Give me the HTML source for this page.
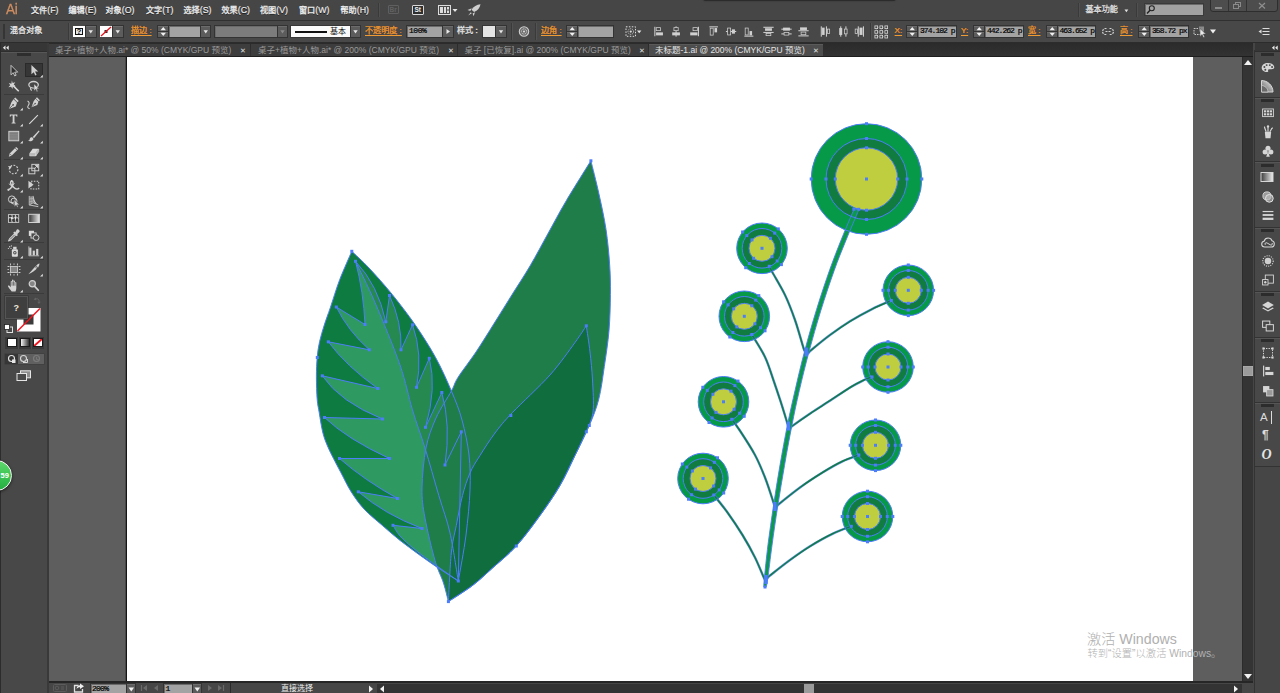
<!DOCTYPE html>
<html lang="zh-CN">
<head>
<meta charset="utf-8">
<title>Adobe Illustrator</title>
<style>
html,body{margin:0;padding:0;}
body{width:1280px;height:693px;position:relative;overflow:hidden;background:#5e5e5e;
 font-family:"Liberation Sans","Noto Sans CJK SC",sans-serif;font-size:8.1px;color:#e6e6e6;}
.a{position:absolute;}
.t{position:absolute;white-space:nowrap;line-height:12px;height:12px;}
#menubar{left:0;top:0;width:1280px;height:20px;background:#464646;}
#ctrlbar{left:0;top:21px;width:1280px;height:21px;background:#484848;}
#l1{left:0;top:20px;width:1280px;height:1px;background:#303030;}
#l2{left:0;top:42px;width:1280px;height:1px;background:#2c2c2c;}
#tabbar{left:48px;top:43px;width:1206px;height:13px;background:linear-gradient(180deg,#2b2b2b,#323232);}
#tabline{left:48px;top:56px;width:1206px;height:1.2px;background:#1e1e1e;}
.tab{position:absolute;top:0;height:13px;background:#3d3d3d;color:#9a9a9a;font-size:8.5px;line-height:13px;white-space:nowrap;}
.tab.on{background:#4d4d4d;color:#e4e4e4;box-shadow:inset 0 1px 0 #5a5a5a;}
.tab span{position:absolute;top:0;}
.mi{top:4px;color:#f0f0f0;font-size:8.1px;-webkit-text-stroke:0.3px;text-shadow:0 0.5px 0.5px rgba(0,0,0,.6);}
.or{color:#f09a34;-webkit-text-stroke:0.2px;text-decoration:underline;text-underline-offset:1.8px;text-decoration-thickness:0.8px;text-shadow:0 0 1px rgba(0,0,0,.55);}
.fld{position:absolute;background:#a3a3a3;color:#000;-webkit-text-stroke:0.2px;font-family:'Liberation Mono',monospace;font-size:8px;letter-spacing:-0.95px;line-height:10px;height:11px;top:26px;box-shadow:inset 1px 1px 0 #6a6a6a,0 0 0 1px #333;white-space:nowrap;overflow:hidden;}
.btn{position:absolute;background:#5c5c5c;top:26px;height:11px;box-shadow:0 0 0 1px #333,inset 0 1px 0 #6c6c6c;}
.sep{position:absolute;top:23px;width:1px;height:17px;background:#3a3a3a;box-shadow:1px 0 0 #525252;}
#tools{left:0;top:43px;width:48px;height:650px;background:#484848;}
#rpanel{left:1254px;top:43px;width:26px;height:650px;background:#484848;}
#artboard{left:127.3px;top:57.2px;width:1066px;height:624.1px;background:#fff;box-shadow:-1.3px 0 0 #161616;}
#vscroll{left:1242.3px;top:57px;width:10.5px;height:626px;background:#343434;box-shadow:inset 1px 0 0 #2b2b2b;}
#status{left:49px;top:682px;width:1204px;height:11px;background:#464646;}
</style>
</head>
<body>
<!-- ====== canvas ====== -->
<div class="a" id="artboard"></div>
<svg class="a" style="left:0;top:0" width="1280" height="693" viewBox="0 0 1280 693">
<path d="M351.8 251.3C354.7 254.1 362.3 260.9 369 268C375.7 275.1 384.4 284.8 392 294.2C399.6 303.6 407.5 313.8 414.8 324.3C422.1 334.9 429.5 346.4 435.6 357.5C441.7 368.6 447 380.6 451.4 391C455.8 401.4 459.1 409.3 462 420C464.9 430.7 467.7 443.3 469 455C470.3 466.7 470.5 476.7 470 490C469.5 503.3 467.9 519.8 466 535C464.1 550.2 459.6 573.3 458.3 581C454.8 578.8 444.1 571.9 437.5 567.5C430.9 563.1 425.1 558.9 418.8 554.4C412.6 549.9 406.1 545.2 400 540.4C393.9 535.5 388.1 530.5 382.2 525.3C376.3 520.1 369.5 514.9 364.4 509.4C359.2 503.8 355.2 498.1 351.3 492C347.4 485.9 344 478.4 341 472.8C338 467.2 335.8 463 333.5 458.5C331.2 454 329.3 450.3 327.5 446C325.7 441.7 324.3 438.4 322.9 432.9C321.5 427.4 320.2 418.6 319.3 413C318.4 407.4 317.7 405.6 317.2 399.5C316.7 393.4 316.4 383.5 316.4 376.5C316.4 369.5 316.7 363.3 317.2 357.5C317.7 351.7 318.4 347 319.6 341.6C320.8 336.2 322.5 330.7 324.3 325C326.1 319.3 327.8 315.1 330.4 307.5C333 299.9 336.1 289.1 339.7 279.7C343.3 270.3 349.8 256 351.8 251.3Z" fill="#0e7b41"/>
<path d="M355.5 261.3Q363.5 292 365 324.5L336.3 307Q348 331 369.3 349.8L328.3 341.8Q346 366 377.8 388.5L322.3 375.8Q340 402 382.5 419L324.5 417.5Q347 439 389.5 458.5L339.5 458.5Q364 480 397.5 498.5L358.3 491.8Q384 514 422 528.5L393 525.3C394.2 527.1 396.3 531.9 400 536C403.7 540.1 409.4 545.1 415 549.7C420.6 554.3 426.6 558.6 433.8 563.8C441 569 454.2 578.1 458.3 581C456.9 573 453.2 547.2 450 533C446.8 518.8 443 509.7 438.8 495.5C434.6 481.3 429.4 462.2 425 448C420.6 433.8 416.7 423.8 412.5 410C408.3 396.2 406.2 382.9 400 365C393.8 347.1 382.4 319.8 375 302.5C367.6 285.2 358.8 268.2 355.5 261.3Z" fill="#2f9962"/>
<path d="M355.5 261.3Q378 285 385.8 321.8L389.5 295.5Q402 322 401 349.8L412.5 324.8Q423 354 416.5 387.3L429.3 358.3Q437 388 425.5 427.3L441.8 392.5Q451 425 445 465L461.3 431.8L458.3 581C456.9 573 453.2 547.2 450 533C446.8 518.8 443 509.7 438.8 495.5C434.6 481.3 429.4 462.2 425 448C420.6 433.8 416.7 423.8 412.5 410C408.3 396.2 406.2 382.9 400 365C393.8 347.1 382.4 319.8 375 302.5C367.6 285.2 358.8 268.2 355.5 261.3Z" fill="#26894f"/>
<path d="M590.9 160.8C592.2 166.2 596.3 181.9 598.8 193.3C601.3 204.7 604.2 217.4 606 229.4C607.8 241.4 609 254.7 609.7 265.5C610.4 276.3 610.5 283.6 610.4 294.4C610.3 305.2 610 318.5 609 330.5C608 342.5 606 355.2 604.3 366.6C602.6 378 601.3 389.2 598.8 399C596.3 408.8 593.3 416.1 589.3 425.5C585.3 434.9 579.9 445.5 575 455.5C570.1 465.5 565.8 475.5 560 485.5C554.2 495.5 547.3 505.4 540 515.5C532.7 525.6 524.2 537.2 516.3 546C508.4 554.8 499.8 561.4 492.5 568C485.2 574.6 479.9 579.9 472.5 585.5C465.1 591.1 452.4 598.9 448.4 601.6C447.6 598.5 445.7 589.9 443.5 583C441.3 576.1 438.1 571.3 435 560.5C431.9 549.7 427.2 530.1 425 518C422.8 505.9 421.8 499.7 422 488C422.2 476.3 423.7 459.7 426 448C428.3 436.3 431.8 427.5 436 418C440.2 408.5 447.7 397.8 451.4 391C455.1 384.2 453.9 383.9 458 377.4C462.1 370.9 470 361 476 352C482 343 488.2 332.9 494.2 323.3C500.2 313.7 506.2 304 512.2 294.4C518.2 284.8 524.3 275.7 530.3 265.5C536.3 255.3 542.3 243.8 548.3 233C554.3 222.2 559.3 212.5 566.4 200.5C573.5 188.5 586.8 167.4 590.9 160.8Z" fill="#1f7d49"/>
<path d="M586.3 325.8C586.9 330.2 589 343 590 352C591 361 592 370 592.5 380C593 390 594 403.4 593 412C592 420.6 587.4 428.5 586.3 431.8C584.4 435.8 579.4 446.6 575 455.5C570.6 464.4 565.8 475.5 560 485.5C554.2 495.5 547.3 505.4 540 515.5C532.7 525.6 524.2 537.2 516.3 546C508.4 554.8 499.8 561.4 492.5 568C485.2 574.6 479.9 579.9 472.5 585.5C465.1 591.1 452.4 598.9 448.4 601.6C448.9 593.5 450 565.7 451.3 553C452.6 540.3 454.4 535.1 456.3 525.5C458.2 515.9 460.2 504.2 462.5 495.5C464.8 486.8 467.1 479.7 470 473C472.9 466.3 475.8 462.2 480 455.5C484.2 448.8 489.6 440.2 495 433C500.4 425.8 503.3 422.2 512.5 412.5C521.7 402.8 539.6 386.7 550 375C560.4 363.3 569 350.7 575 342.5C581 334.3 584.4 328.6 586.3 325.8Z" fill="#106d3e"/>
<circle cx="866.5" cy="179" r="55.3" fill="#069a48"/>
<circle cx="866.5" cy="179" r="40.5" fill="#117c40"/>
<circle cx="866.5" cy="179" r="31.2" fill="#bfce3f"/>
<circle cx="762" cy="248.3" r="25.3" fill="#069a48"/>
<circle cx="762" cy="248.3" r="19.8" fill="#117c40"/>
<circle cx="762" cy="248.3" r="13" fill="#bfce3f"/>
<circle cx="908.3" cy="290.3" r="25.3" fill="#069a48"/>
<circle cx="908.3" cy="290.3" r="19.8" fill="#117c40"/>
<circle cx="908.3" cy="290.3" r="13" fill="#bfce3f"/>
<circle cx="744.3" cy="316.3" r="25.3" fill="#069a48"/>
<circle cx="744.3" cy="316.3" r="19.8" fill="#117c40"/>
<circle cx="744.3" cy="316.3" r="13" fill="#bfce3f"/>
<circle cx="888" cy="367" r="25.3" fill="#069a48"/>
<circle cx="888" cy="367" r="19.8" fill="#117c40"/>
<circle cx="888" cy="367" r="13" fill="#bfce3f"/>
<circle cx="723.5" cy="401.8" r="25.3" fill="#069a48"/>
<circle cx="723.5" cy="401.8" r="19.8" fill="#117c40"/>
<circle cx="723.5" cy="401.8" r="13" fill="#bfce3f"/>
<circle cx="875.5" cy="445.3" r="25.3" fill="#069a48"/>
<circle cx="875.5" cy="445.3" r="19.8" fill="#117c40"/>
<circle cx="875.5" cy="445.3" r="13" fill="#bfce3f"/>
<circle cx="703" cy="478.5" r="25.3" fill="#069a48"/>
<circle cx="703" cy="478.5" r="19.8" fill="#117c40"/>
<circle cx="703" cy="478.5" r="13" fill="#bfce3f"/>
<circle cx="867.5" cy="516.5" r="25.3" fill="#069a48"/>
<circle cx="867.5" cy="516.5" r="19.8" fill="#117c40"/>
<circle cx="867.5" cy="516.5" r="13" fill="#bfce3f"/>
<g fill="none" stroke="#4c7dfa" stroke-width="2.500" stroke-linecap="round" opacity="0.800">
<path d="M769.3 266.3C769.8 267.3 769.9 267.7 772.5 272.5C775.1 277.3 781.2 287.1 785 295C788.8 302.9 791.9 311.2 795 320C798.1 328.8 801.8 342.7 803.5 348C805.2 353.3 805.2 351.3 805.5 352"/>
<path d="M891.3 300.5C888.2 301.9 879.4 305.3 872.5 308.8C865.6 312.3 857.1 316.9 850 321.3C842.9 325.7 836.5 330.2 830 335C823.5 339.8 814.9 347 811.3 350C807.7 353 809 352.5 808.5 353"/>
<path d="M751.8 334.5C754 338.2 761.4 349.4 765 357C768.6 364.6 770.9 372.8 773.4 380C775.9 387.2 778 393.5 780.2 400.2C782.4 406.9 785.2 416.1 786.5 420.4C787.8 424.7 787.8 425.1 788 426"/>
<path d="M872 377C870.7 377.5 867.5 378.3 864 380C860.5 381.7 856.4 383.6 850.9 387C845.4 390.4 837.4 395.8 830.7 400.2C824 404.6 816.9 409 810.5 413.3C804.1 417.6 795.6 423.6 792.3 426C789 428.4 790.8 427.2 790.5 427.5"/>
<path d="M731.8 419.3C733.1 421.1 735.6 424.1 739.5 430C743.4 435.9 750.8 447.1 755 455C759.2 462.9 761.9 469.6 765 477.5C768.1 485.4 771.9 497.6 773.5 502.5C775.1 507.4 774.3 506.2 774.5 507"/>
<path d="M858.8 455C856.1 456.1 848.5 458.4 842.5 461.3C836.5 464.2 829.6 468.1 822.5 472.5C815.4 476.9 807.2 482.2 800 487.5C792.8 492.8 782.8 500.9 779 504C775.2 507.1 777.3 505.7 777 506"/>
<path d="M713.8 495C716.1 497.9 722.7 505.8 727.5 512.5C732.3 519.2 737.9 527.5 742.5 535C747.1 542.5 751.5 550.4 755 557.5C758.5 564.6 762.1 573.8 763.8 577.5C765.5 581.2 764.8 579.6 765 580"/>
<path d="M851.3 526.3C848.2 527.5 839.4 530.5 832.5 533.8C825.6 537.1 817.1 541.9 810 546.3C802.9 550.7 796.7 555.1 790 560C783.3 564.9 773.8 572.5 770 575.5C766.2 578.5 767.9 577.6 767.5 578"/>
</g>
<g fill="none" stroke="#127c40" stroke-width="1.500" stroke-linecap="round">
<path d="M769.3 266.3C769.8 267.3 769.9 267.7 772.5 272.5C775.1 277.3 781.2 287.1 785 295C788.8 302.9 791.9 311.2 795 320C798.1 328.8 801.8 342.7 803.5 348C805.2 353.3 805.2 351.3 805.5 352"/>
<path d="M891.3 300.5C888.2 301.9 879.4 305.3 872.5 308.8C865.6 312.3 857.1 316.9 850 321.3C842.9 325.7 836.5 330.2 830 335C823.5 339.8 814.9 347 811.3 350C807.7 353 809 352.5 808.5 353"/>
<path d="M751.8 334.5C754 338.2 761.4 349.4 765 357C768.6 364.6 770.9 372.8 773.4 380C775.9 387.2 778 393.5 780.2 400.2C782.4 406.9 785.2 416.1 786.5 420.4C787.8 424.7 787.8 425.1 788 426"/>
<path d="M872 377C870.7 377.5 867.5 378.3 864 380C860.5 381.7 856.4 383.6 850.9 387C845.4 390.4 837.4 395.8 830.7 400.2C824 404.6 816.9 409 810.5 413.3C804.1 417.6 795.6 423.6 792.3 426C789 428.4 790.8 427.2 790.5 427.5"/>
<path d="M731.8 419.3C733.1 421.1 735.6 424.1 739.5 430C743.4 435.9 750.8 447.1 755 455C759.2 462.9 761.9 469.6 765 477.5C768.1 485.4 771.9 497.6 773.5 502.5C775.1 507.4 774.3 506.2 774.5 507"/>
<path d="M858.8 455C856.1 456.1 848.5 458.4 842.5 461.3C836.5 464.2 829.6 468.1 822.5 472.5C815.4 476.9 807.2 482.2 800 487.5C792.8 492.8 782.8 500.9 779 504C775.2 507.1 777.3 505.7 777 506"/>
<path d="M713.8 495C716.1 497.9 722.7 505.8 727.5 512.5C732.3 519.2 737.9 527.5 742.5 535C747.1 542.5 751.5 550.4 755 557.5C758.5 564.6 762.1 573.8 763.8 577.5C765.5 581.2 764.8 579.6 765 580"/>
<path d="M851.3 526.3C848.2 527.5 839.4 530.5 832.5 533.8C825.6 537.1 817.1 541.9 810 546.3C802.9 550.7 796.7 555.1 790 560C783.3 564.9 773.8 572.5 770 575.5C766.2 578.5 767.9 577.6 767.5 578"/>
</g>
<path d="M854.4 208.4C852.2 213.5 845.5 229 841.5 239.1C837.4 249.3 834.1 257.6 829.9 269.3C825.8 281 820.8 295.7 816.6 309.4C812.4 323 808.2 337.6 804.7 350.9C801.1 364.3 798.1 377.3 795.3 389.5C792.4 401.8 790.1 412.1 787.5 424.6C785 437.1 782.5 451.1 780.1 464.6C777.8 478.1 775.5 492.3 773.5 505.7C771.5 519 769.6 532.6 768 544.7C766.5 556.9 765 571.8 764.3 578.8C763.6 585.8 763.9 585.5 763.8 586.9L766.2 587.1C766.4 585.8 766.7 586.2 767.7 579.2C768.7 572.2 770.3 557.4 772 545.3C773.6 533.1 775.6 519.6 777.7 506.3C779.8 493 782.1 478.9 784.5 465.4C786.8 451.9 789.4 437.9 791.9 425.4C794.3 412.9 796.5 402.7 799.3 390.5C802.2 378.2 805.3 365.4 808.9 352.1C812.5 338.8 816.6 324.2 820.8 310.6C825 297.1 829.9 282.4 834.1 270.7C838.2 259.1 841.6 251 845.7 240.9C849.8 230.8 856.5 215.3 858.6 210.2Z" fill="#0a9a48" stroke="#4c7dfa" stroke-width="0.900"/>
<g fill="none" stroke="#4c7dfa" stroke-width="1">
<path d="M351.8 251.3C354.7 254.1 362.3 260.9 369 268C375.7 275.1 384.4 284.8 392 294.2C399.6 303.6 407.5 313.8 414.8 324.3C422.1 334.9 429.5 346.4 435.6 357.5C441.7 368.6 447 380.6 451.4 391C455.8 401.4 459.1 409.3 462 420C464.9 430.7 467.7 443.3 469 455C470.3 466.7 470.5 476.7 470 490C469.5 503.3 467.9 519.8 466 535C464.1 550.2 459.6 573.3 458.3 581C454.8 578.8 444.1 571.9 437.5 567.5C430.9 563.1 425.1 558.9 418.8 554.4C412.6 549.9 406.1 545.2 400 540.4C393.9 535.5 388.1 530.5 382.2 525.3C376.3 520.1 369.5 514.9 364.4 509.4C359.2 503.8 355.2 498.1 351.3 492C347.4 485.9 344 478.4 341 472.8C338 467.2 335.8 463 333.5 458.5C331.2 454 329.3 450.3 327.5 446C325.7 441.7 324.3 438.4 322.9 432.9C321.5 427.4 320.2 418.6 319.3 413C318.4 407.4 317.7 405.6 317.2 399.5C316.7 393.4 316.4 383.5 316.4 376.5C316.4 369.5 316.7 363.3 317.2 357.5C317.7 351.7 318.4 347 319.6 341.6C320.8 336.2 322.5 330.7 324.3 325C326.1 319.3 327.8 315.1 330.4 307.5C333 299.9 336.1 289.1 339.7 279.7C343.3 270.3 349.8 256 351.8 251.3Z"/>
<path d="M355.5 261.3Q363.5 292 365 324.5L336.3 307Q348 331 369.3 349.8L328.3 341.8Q346 366 377.8 388.5L322.3 375.8Q340 402 382.5 419L324.5 417.5Q347 439 389.5 458.5L339.5 458.5Q364 480 397.5 498.5L358.3 491.8Q384 514 422 528.5L393 525.3C394.2 527.1 396.3 531.9 400 536C403.7 540.1 409.4 545.1 415 549.7C420.6 554.3 426.6 558.6 433.8 563.8C441 569 454.2 578.1 458.3 581"/>
<path d="M355.5 261.3Q378 285 385.8 321.8L389.5 295.5Q402 322 401 349.8L412.5 324.8Q423 354 416.5 387.3L429.3 358.3Q437 388 425.5 427.3L441.8 392.5Q451 425 445 465L461.3 431.8L458.3 581"/>
<path d="M355.5 261.3C358.8 268.2 367.6 285.2 375 302.5C382.4 319.8 393.8 347.1 400 365C406.2 382.9 408.3 396.2 412.5 410C416.7 423.8 420.6 433.8 425 448C429.4 462.2 434.6 481.3 438.8 495.5C443 509.7 446.8 518.8 450 533C453.2 547.2 456.9 573 458.3 581"/>
<path d="M590.9 160.8C592.2 166.2 596.3 181.9 598.8 193.3C601.3 204.7 604.2 217.4 606 229.4C607.8 241.4 609 254.7 609.7 265.5C610.4 276.3 610.5 283.6 610.4 294.4C610.3 305.2 610 318.5 609 330.5C608 342.5 606 355.2 604.3 366.6C602.6 378 601.3 389.2 598.8 399C596.3 408.8 593.3 416.1 589.3 425.5C585.3 434.9 579.9 445.5 575 455.5C570.1 465.5 565.8 475.5 560 485.5C554.2 495.5 547.3 505.4 540 515.5C532.7 525.6 524.2 537.2 516.3 546C508.4 554.8 499.8 561.4 492.5 568C485.2 574.6 479.9 579.9 472.5 585.5C465.1 591.1 452.4 598.9 448.4 601.6C447.6 598.5 445.7 589.9 443.5 583C441.3 576.1 438.1 571.3 435 560.5C431.9 549.7 427.2 530.1 425 518C422.8 505.9 421.8 499.7 422 488C422.2 476.3 423.7 459.7 426 448C428.3 436.3 431.8 427.5 436 418C440.2 408.5 447.7 397.8 451.4 391C455.1 384.2 453.9 383.9 458 377.4C462.1 370.9 470 361 476 352C482 343 488.2 332.9 494.2 323.3C500.2 313.7 506.2 304 512.2 294.4C518.2 284.8 524.3 275.7 530.3 265.5C536.3 255.3 542.3 243.8 548.3 233C554.3 222.2 559.3 212.5 566.4 200.5C573.5 188.5 586.8 167.4 590.9 160.8Z"/>
<path d="M586.3 325.8C586.9 330.2 589 343 590 352C591 361 592 370 592.5 380C593 390 594 403.4 593 412C592 420.6 587.4 428.5 586.3 431.8C584.4 435.8 579.4 446.6 575 455.5C570.6 464.4 565.8 475.5 560 485.5C554.2 495.5 547.3 505.4 540 515.5C532.7 525.6 524.2 537.2 516.3 546C508.4 554.8 499.8 561.4 492.5 568C485.2 574.6 479.9 579.9 472.5 585.5C465.1 591.1 452.4 598.9 448.4 601.6C448.9 593.5 450 565.7 451.3 553C452.6 540.3 454.4 535.1 456.3 525.5C458.2 515.9 460.2 504.2 462.5 495.5C464.8 486.8 467.1 479.7 470 473C472.9 466.3 475.8 462.2 480 455.5C484.2 448.8 489.6 440.2 495 433C500.4 425.8 503.3 422.2 512.5 412.5C521.7 402.8 539.6 386.7 550 375C560.4 363.3 569 350.7 575 342.5C581 334.3 584.4 328.6 586.3 325.8Z"/>
<circle cx="866.5" cy="179" r="55.3"/>
<circle cx="866.5" cy="179" r="40.5"/>
<circle cx="866.5" cy="179" r="31.2"/>
<circle cx="762" cy="248.3" r="25.3"/>
<circle cx="762" cy="248.3" r="19.8"/>
<circle cx="762" cy="248.3" r="13"/>
<circle cx="908.3" cy="290.3" r="25.3"/>
<circle cx="908.3" cy="290.3" r="19.8"/>
<circle cx="908.3" cy="290.3" r="13"/>
<circle cx="744.3" cy="316.3" r="25.3"/>
<circle cx="744.3" cy="316.3" r="19.8"/>
<circle cx="744.3" cy="316.3" r="13"/>
<circle cx="888" cy="367" r="25.3"/>
<circle cx="888" cy="367" r="19.8"/>
<circle cx="888" cy="367" r="13"/>
<circle cx="723.5" cy="401.8" r="25.3"/>
<circle cx="723.5" cy="401.8" r="19.8"/>
<circle cx="723.5" cy="401.8" r="13"/>
<circle cx="875.5" cy="445.3" r="25.3"/>
<circle cx="875.5" cy="445.3" r="19.8"/>
<circle cx="875.5" cy="445.3" r="13"/>
<circle cx="703" cy="478.5" r="25.3"/>
<circle cx="703" cy="478.5" r="19.8"/>
<circle cx="703" cy="478.5" r="13"/>
<circle cx="867.5" cy="516.5" r="25.3"/>
<circle cx="867.5" cy="516.5" r="19.8"/>
<circle cx="867.5" cy="516.5" r="13"/>
</g>
<g fill="#4c7dfa">
<rect x="350.3" y="249.8" width="3" height="3"/>
<rect x="315.8" y="356" width="3" height="3"/>
<rect x="456.8" y="579.5" width="3" height="3"/>
<rect x="354" y="259.8" width="3" height="3"/>
<rect x="363.5" y="323" width="3" height="3"/>
<rect x="367.8" y="348.3" width="3" height="3"/>
<rect x="376.3" y="387" width="3" height="3"/>
<rect x="381" y="417.5" width="3" height="3"/>
<rect x="388" y="457" width="3" height="3"/>
<rect x="396" y="497" width="3" height="3"/>
<rect x="420.5" y="527" width="3" height="3"/>
<rect x="334.8" y="305.5" width="3" height="3"/>
<rect x="326.8" y="340.3" width="3" height="3"/>
<rect x="320.8" y="374.3" width="3" height="3"/>
<rect x="323" y="416" width="3" height="3"/>
<rect x="338" y="457" width="3" height="3"/>
<rect x="356.8" y="490.3" width="3" height="3"/>
<rect x="391.5" y="523.8" width="3" height="3"/>
<rect x="384.3" y="320.3" width="3" height="3"/>
<rect x="399.5" y="348.3" width="3" height="3"/>
<rect x="415" y="385.8" width="3" height="3"/>
<rect x="424" y="425.8" width="3" height="3"/>
<rect x="443.5" y="463.5" width="3" height="3"/>
<rect x="388" y="294" width="3" height="3"/>
<rect x="411" y="323.3" width="3" height="3"/>
<rect x="427.8" y="356.8" width="3" height="3"/>
<rect x="440.3" y="391" width="3" height="3"/>
<rect x="459.8" y="430.3" width="3" height="3"/>
<rect x="589.4" y="159.3" width="3" height="3"/>
<rect x="446.9" y="600.1" width="3" height="3"/>
<rect x="587.8" y="424" width="3" height="3"/>
<rect x="514.8" y="544.5" width="3" height="3"/>
<rect x="584.8" y="324.3" width="3" height="3"/>
<rect x="509.3" y="414" width="3" height="3"/>
<rect x="584.8" y="430.3" width="3" height="3"/>
<rect x="920.3" y="177.5" width="3" height="3"/>
<rect x="865" y="232.8" width="3" height="3"/>
<rect x="809.7" y="177.5" width="3" height="3"/>
<rect x="865" y="122.2" width="3" height="3"/>
<rect x="905.5" y="177.5" width="3" height="3"/>
<rect x="865" y="218" width="3" height="3"/>
<rect x="824.5" y="177.5" width="3" height="3"/>
<rect x="865" y="137" width="3" height="3"/>
<rect x="896.2" y="177.5" width="3" height="3"/>
<rect x="865" y="208.7" width="3" height="3"/>
<rect x="833.8" y="177.5" width="3" height="3"/>
<rect x="865" y="146.3" width="3" height="3"/>
<rect x="865" y="177.5" width="3" height="3"/>
<rect x="779.9" y="263.1" width="3" height="3"/>
<rect x="744.2" y="266.2" width="3" height="3"/>
<rect x="741.1" y="230.5" width="3" height="3"/>
<rect x="776.8" y="227.4" width="3" height="3"/>
<rect x="775.7" y="259.5" width="3" height="3"/>
<rect x="747.8" y="262" width="3" height="3"/>
<rect x="745.3" y="234.1" width="3" height="3"/>
<rect x="773.2" y="231.6" width="3" height="3"/>
<rect x="770.5" y="255.2" width="3" height="3"/>
<rect x="752.1" y="256.8" width="3" height="3"/>
<rect x="750.5" y="238.4" width="3" height="3"/>
<rect x="768.9" y="236.8" width="3" height="3"/>
<rect x="760.5" y="246.8" width="3" height="3"/>
<rect x="932.1" y="288.8" width="3" height="3"/>
<rect x="906.8" y="314.1" width="3" height="3"/>
<rect x="881.5" y="288.8" width="3" height="3"/>
<rect x="906.8" y="263.5" width="3" height="3"/>
<rect x="926.6" y="288.8" width="3" height="3"/>
<rect x="906.8" y="308.6" width="3" height="3"/>
<rect x="887" y="288.8" width="3" height="3"/>
<rect x="906.8" y="269" width="3" height="3"/>
<rect x="919.8" y="288.8" width="3" height="3"/>
<rect x="906.8" y="301.8" width="3" height="3"/>
<rect x="893.8" y="288.8" width="3" height="3"/>
<rect x="906.8" y="275.8" width="3" height="3"/>
<rect x="906.8" y="288.8" width="3" height="3"/>
<rect x="763.5" y="329.3" width="3" height="3"/>
<rect x="728.3" y="335.5" width="3" height="3"/>
<rect x="722.1" y="300.3" width="3" height="3"/>
<rect x="757.3" y="294.1" width="3" height="3"/>
<rect x="759" y="326.2" width="3" height="3"/>
<rect x="731.4" y="331" width="3" height="3"/>
<rect x="726.6" y="303.4" width="3" height="3"/>
<rect x="754.2" y="298.6" width="3" height="3"/>
<rect x="753.4" y="322.3" width="3" height="3"/>
<rect x="735.3" y="325.4" width="3" height="3"/>
<rect x="732.2" y="307.3" width="3" height="3"/>
<rect x="750.3" y="304.2" width="3" height="3"/>
<rect x="742.8" y="314.8" width="3" height="3"/>
<rect x="911.8" y="365.5" width="3" height="3"/>
<rect x="886.5" y="390.8" width="3" height="3"/>
<rect x="861.2" y="365.5" width="3" height="3"/>
<rect x="886.5" y="340.2" width="3" height="3"/>
<rect x="906.3" y="365.5" width="3" height="3"/>
<rect x="886.5" y="385.3" width="3" height="3"/>
<rect x="866.7" y="365.5" width="3" height="3"/>
<rect x="886.5" y="345.7" width="3" height="3"/>
<rect x="899.5" y="365.5" width="3" height="3"/>
<rect x="886.5" y="378.5" width="3" height="3"/>
<rect x="873.5" y="365.5" width="3" height="3"/>
<rect x="886.5" y="352.5" width="3" height="3"/>
<rect x="886.5" y="365.5" width="3" height="3"/>
<rect x="742.7" y="414.8" width="3" height="3"/>
<rect x="707.5" y="421" width="3" height="3"/>
<rect x="701.3" y="385.8" width="3" height="3"/>
<rect x="736.5" y="379.6" width="3" height="3"/>
<rect x="738.2" y="411.7" width="3" height="3"/>
<rect x="710.6" y="416.5" width="3" height="3"/>
<rect x="705.8" y="388.9" width="3" height="3"/>
<rect x="733.4" y="384.1" width="3" height="3"/>
<rect x="732.6" y="407.8" width="3" height="3"/>
<rect x="714.5" y="410.9" width="3" height="3"/>
<rect x="711.4" y="392.8" width="3" height="3"/>
<rect x="729.5" y="389.7" width="3" height="3"/>
<rect x="722" y="400.3" width="3" height="3"/>
<rect x="899.3" y="443.8" width="3" height="3"/>
<rect x="874" y="469.1" width="3" height="3"/>
<rect x="848.7" y="443.8" width="3" height="3"/>
<rect x="874" y="418.5" width="3" height="3"/>
<rect x="893.8" y="443.8" width="3" height="3"/>
<rect x="874" y="463.6" width="3" height="3"/>
<rect x="854.2" y="443.8" width="3" height="3"/>
<rect x="874" y="424" width="3" height="3"/>
<rect x="887" y="443.8" width="3" height="3"/>
<rect x="874" y="456.8" width="3" height="3"/>
<rect x="861" y="443.8" width="3" height="3"/>
<rect x="874" y="430.8" width="3" height="3"/>
<rect x="874" y="443.8" width="3" height="3"/>
<rect x="722.2" y="491.5" width="3" height="3"/>
<rect x="687" y="497.7" width="3" height="3"/>
<rect x="680.8" y="462.5" width="3" height="3"/>
<rect x="716" y="456.3" width="3" height="3"/>
<rect x="717.7" y="488.4" width="3" height="3"/>
<rect x="690.1" y="493.2" width="3" height="3"/>
<rect x="685.3" y="465.6" width="3" height="3"/>
<rect x="712.9" y="460.8" width="3" height="3"/>
<rect x="712.1" y="484.5" width="3" height="3"/>
<rect x="694" y="487.6" width="3" height="3"/>
<rect x="690.9" y="469.5" width="3" height="3"/>
<rect x="709" y="466.4" width="3" height="3"/>
<rect x="701.5" y="477" width="3" height="3"/>
<rect x="891.3" y="515" width="3" height="3"/>
<rect x="866" y="540.3" width="3" height="3"/>
<rect x="840.7" y="515" width="3" height="3"/>
<rect x="866" y="489.7" width="3" height="3"/>
<rect x="885.8" y="515" width="3" height="3"/>
<rect x="866" y="534.8" width="3" height="3"/>
<rect x="846.2" y="515" width="3" height="3"/>
<rect x="866" y="495.2" width="3" height="3"/>
<rect x="879" y="515" width="3" height="3"/>
<rect x="866" y="528" width="3" height="3"/>
<rect x="853" y="515" width="3" height="3"/>
<rect x="866" y="502" width="3" height="3"/>
<rect x="866" y="515" width="3" height="3"/>
<rect x="767.8" y="264.8" width="3" height="3"/>
<rect x="889.8" y="299" width="3" height="3"/>
<rect x="750.3" y="333" width="3" height="3"/>
<rect x="870.5" y="375.5" width="3" height="3"/>
<rect x="730.3" y="417.8" width="3" height="3"/>
<rect x="857.3" y="453.5" width="3" height="3"/>
<rect x="712.3" y="493.5" width="3" height="3"/>
<rect x="849.8" y="524.8" width="3" height="3"/>
<rect x="763.5" y="585.5" width="3" height="3"/>
<rect x="852.3" y="207.8" width="3" height="3"/>
<rect x="857.3" y="207.8" width="3" height="3"/>
<rect x="804.7" y="347.5" width="3.2" height="9"/>
<rect x="786.9" y="421.5" width="3.2" height="9"/>
<rect x="773.4" y="502" width="3.2" height="9"/>
<rect x="764.4" y="575" width="3.2" height="9"/>
</g>
</svg>

<!-- ====== top bars ====== -->
<div class="a" id="menubar"></div>
<div class="a" id="l1"></div>
<div class="a" id="ctrlbar"></div>
<div class="a" id="l2"></div>
<div class="a" style="left:703px;top:-3px;width:193px;height:4px;background:#2b2b2b;border-radius:0 0 3px 3px;box-shadow:0 0 1.5px #2b2b2b;"></div>
<div class="t" style="left:5.500px;top:0.500px;font-size:15px;line-height:16px;height:16px;color:#cf8d60;letter-spacing:-0.2px;transform:scaleX(0.9);transform-origin:0 0;-webkit-text-stroke:0.3px;">Ai</div>
<div class="t mi" style="left:31px;">文件<span style="font-size:8.800px;-webkit-text-stroke:0.15px;">(F)</span></div>
<div class="t mi" style="left:68.5px;">编辑<span style="font-size:8.800px;-webkit-text-stroke:0.15px;">(E)</span></div>
<div class="t mi" style="left:105.5px;">对象<span style="font-size:8.800px;-webkit-text-stroke:0.15px;">(O)</span></div>
<div class="t mi" style="left:146px;">文字<span style="font-size:8.800px;-webkit-text-stroke:0.15px;">(T)</span></div>
<div class="t mi" style="left:183.5px;">选择<span style="font-size:8.800px;-webkit-text-stroke:0.15px;">(S)</span></div>
<div class="t mi" style="left:221.5px;">效果<span style="font-size:8.800px;-webkit-text-stroke:0.15px;">(C)</span></div>
<div class="t mi" style="left:260px;">视图<span style="font-size:8.800px;-webkit-text-stroke:0.15px;">(V)</span></div>
<div class="t mi" style="left:299px;">窗口<span style="font-size:8.800px;-webkit-text-stroke:0.15px;">(W)</span></div>
<div class="t mi" style="left:340.5px;">帮助<span style="font-size:8.800px;-webkit-text-stroke:0.15px;">(H)</span></div>
<div class="a" style="left:378px;top:3px;width:1px;height:14px;background:#3a3a3a;box-shadow:1px 0 0 #505050;"></div>
<!-- Br -->
<div class="a" style="left:388px;top:5px;width:11px;height:9px;border:1px solid #5f5f5f;border-radius:1px;box-sizing:border-box;"></div>
<div class="t" style="left:389.5px;top:4px;font-size:6.5px;font-weight:bold;color:#626262;">Br</div>
<!-- St -->
<div class="a" style="left:412px;top:5px;width:12px;height:10px;border:1px solid #d8d8d8;border-radius:1px;box-sizing:border-box;background:#2f2f2f;"></div>
<div class="t" style="left:414.5px;top:4px;font-size:6.5px;font-weight:bold;color:#f0f0f0;">St</div>
<!-- layout icon -->
<svg class="a" style="left:437px;top:4px" width="22" height="12" viewBox="0 0 22 12"><rect x="1.5" y="1.5" width="12" height="9" fill="#4a4a4a" stroke="#dcdcdc"/><rect x="3" y="3" width="3" height="6" fill="#dcdcdc"/><rect x="7" y="3" width="2" height="6" fill="#dcdcdc"/><rect x="10" y="3" width="2" height="2.5" fill="#dcdcdc"/><rect x="10" y="6.5" width="2" height="2.5" fill="#dcdcdc"/><path d="M15.5 5h5l-2.5 3z" fill="#e6e6e6"/></svg>
<!-- rocket -->
<svg class="a" style="left:466px;top:3px" width="16" height="14" viewBox="0 0 16 14"><path d="M14.500 1.200c-3.800 0.300-7 2.300-9 5.600l2.600 2.300c3.500-1.600 5.900-4.300 6.400-7.900z" fill="#cfcfcf"/><path d="M5.800 5.300l-4.300 1.700 2.800 1zM9 9.200l-1.400 4.100 -1-2.700zM4.800 9.200l-2.600 3.300 3.600-2.300z" fill="#cfcfcf"/></svg>
<!-- workspace -->
<div class="a" style="left:1078px;top:3px;width:1px;height:14px;background:#3a3a3a;box-shadow:1px 0 0 #505050;"></div>
<div class="t mi" style="left:1085.5px;color:#e0e0e0;">基本功能</div>
<svg class="a" style="left:1124px;top:9px" width="5" height="4" viewBox="0 0 5 4"><path d="M0.500 0.500h3.800l-1.900 2.800z" fill="#e0e0e0"/></svg>
<div class="a" style="left:1136px;top:3px;width:1px;height:14px;background:#3a3a3a;box-shadow:1px 0 0 #505050;"></div>
<div class="a" style="left:1144.5px;top:4px;width:58.5px;height:11px;background:#a2a2a2;box-shadow:inset 1px 1px 0 #6a6a6a, 0 0 0 1px #3a3a3a;"></div>
<svg class="a" style="left:1146px;top:4px" width="10" height="11" viewBox="0 0 10 11"><circle cx="5.800" cy="4.200" r="2.500" fill="none" stroke="#222" stroke-width="1.100"/><path d="M4 6.200L1 9.500" stroke="#222" stroke-width="1.400"/></svg>
<!-- window buttons -->
<div class="a" style="left:1209.5px;top:-2px;width:68px;height:14px;border:1px solid #2e2e2e;border-radius:0 0 3px 3px;background:#4d4d4d;box-sizing:border-box;"></div>
<div class="a" style="left:1228px;top:0;width:1px;height:11px;background:#333;"></div>
<div class="a" style="left:1246px;top:0;width:1px;height:11px;background:#333;"></div>
<div class="a" style="left:1215px;top:7px;width:7px;height:2px;background:#8a8a8a;"></div>
<svg class="a" style="left:1232px;top:1px" width="10" height="10" viewBox="0 0 10 10"><rect x="3.500" y="1.500" width="5" height="4" fill="none" stroke="#8a8a8a"/><rect x="1.500" y="3.500" width="5" height="4" fill="#4d4d4d" stroke="#8a8a8a"/></svg>
<svg class="a" style="left:1257px;top:1px" width="10" height="10" viewBox="0 0 10 10"><path d="M2 2l6 5.500M8 2l-6 5.500" stroke="#8f8f8f" stroke-width="1.200"/></svg>

<div class="a" style="left:3px;top:24px;width:2px;height:15px;background:#353535;"></div>
<div class="t" style="left:10px;top:25px;color:#e8e8e8;-webkit-text-stroke:0.3px;text-shadow:0 0.5px 0.5px rgba(0,0,0,.6);">混合对象</div>
<div class="sep" style="left:68px;"></div>
<div class="a" style="left:73px;top:26px;width:12px;height:11px;background:#fff;box-sizing:border-box;border:1px solid #fff;"><div class="a" style="left:1px;top:1px;width:8px;height:7px;border:1px solid #111;box-sizing:border-box;background:#e8e8e8"></div></div>
<div class="t" style="left:76.5px;top:25.5px;color:#111;font-size:8px;font-weight:bold;">?</div>
<div class="btn" style="left:86px;width:9.5px;"></div>
<svg class="a" style="left:86px;top:26px" width="9.5" height="11" viewBox="0 0 9.5 11"><path d="M2.55 4.200h4.400l-2.200 3.200z" fill="#e8e8e8"/></svg>
<svg class="a" style="left:100px;top:26px" width="12" height="11" viewBox="0 0 12 11"><rect width="12" height="11" fill="#fff"/><rect x="4.500" y="4" width="3" height="3" fill="#333"/><path d="M1 10L11 1" stroke="#e8141c" stroke-width="1.300"/></svg>
<div class="btn" style="left:113px;width:9.5px;"></div>
<svg class="a" style="left:113px;top:26px" width="9.5" height="11" viewBox="0 0 9.5 11"><path d="M2.55 4.200h4.400l-2.200 3.200z" fill="#e8e8e8"/></svg>
<div class="t or" style="left:131px;top:25px;">描边 :</div>
<div class="btn" style="left:158px;width:10.5px;height:5px;"></div><div class="btn" style="left:158px;top:32px;width:10.5px;height:5px;"></div>
<svg class="a" style="left:158px;top:26px" width="10.5" height="11" viewBox="0 0 10.5 11"><path d="M2.55 4.300h5.400l-2.700-3.200z M2.55 6.700h5.400l-2.700 3.200z" fill="#f0f0f0"/></svg>
<div class="fld" style="left:169px;width:31px;background:#a3a3a3;"><span style="position:relative;left:2px;"></span></div>
<div class="btn" style="left:200.5px;width:9.5px;"></div>
<svg class="a" style="left:200.5px;top:26px" width="9.5" height="11" viewBox="0 0 9.5 11"><path d="M2.55 4.200h4.400l-2.200 3.200z" fill="#e8e8e8"/></svg>
<div class="fld" style="left:215px;width:62px;background:#7c7c7c;"><span style="position:relative;left:2px;"></span></div>
<div class="btn" style="left:277.5px;width:9px;"></div>
<svg class="a" style="left:277.5px;top:26px" width="9" height="11" viewBox="0 0 9 11"><path d="M2.3 4.200h4.400l-2.200 3.200z" fill="#8a8a8a"/></svg>
<div class="a" style="left:291px;top:26px;width:59px;height:11px;background:#fafafa;box-shadow:0 0 0 1px #363636;"></div>
<div class="a" style="left:295px;top:30.500px;width:32px;height:2px;background:#111;"></div>
<div class="t" style="left:330px;top:25.500px;color:#111;font-size:8px;">基本</div>
<div class="btn" style="left:351px;width:9px;"></div>
<svg class="a" style="left:351px;top:26px" width="9" height="11" viewBox="0 0 9 11"><path d="M2.3 4.200h4.400l-2.200 3.200z" fill="#e8e8e8"/></svg>
<div class="t or" style="left:365px;top:25px;">不透明度 :</div>
<div class="fld" style="left:407px;width:35.5px;background:#a3a3a3;letter-spacing:-0.45px;"><span style="position:relative;left:2px;">100%</span></div>
<div class="btn" style="left:443px;width:9.500px;"></div><svg class="a" style="left:443px;top:26px" width="9.500" height="11" viewBox="0 0 9.500 11"><path d="M3.500 3v5l3.500-2.500z" fill="#e8e8e8"/></svg>
<div class="t " style="left:457px;top:25px;color:#e8e8e8;-webkit-text-stroke:0.3px;text-shadow:0 0.5px 0.5px rgba(0,0,0,.6);">样式 :</div>
<div class="a" style="left:483px;top:26px;width:12px;height:11px;background:#e4e4e4;box-shadow:0 0 0 1px #363636;"></div>
<div class="btn" style="left:496px;width:10px;"></div>
<svg class="a" style="left:496px;top:26px" width="10" height="11" viewBox="0 0 10 11"><path d="M2.8 4.200h4.400l-2.200 3.200z" fill="#e8e8e8"/></svg>
<div class="sep" style="left:511px;"></div>
<svg class="a" style="left:516.500px;top:25px" width="14" height="13" viewBox="0 0 14 13"><circle cx="7" cy="6.500" r="4.700" fill="#6e6e6e" stroke="#cfcfcf" stroke-width="1.100"/><circle cx="7" cy="6.500" r="2.600" fill="none" stroke="#e0e0e0" stroke-width="0.900" stroke-dasharray="1 0.800"/><circle cx="7" cy="6.500" r="1" fill="#e0e0e0"/></svg>
<div class="sep" style="left:535px;"></div>
<div class="t or" style="left:541px;top:25px;">边角 :</div>
<div class="btn" style="left:567px;width:10.5px;height:5px;"></div><div class="btn" style="left:567px;top:32px;width:10.5px;height:5px;"></div>
<svg class="a" style="left:567px;top:26px" width="10.5" height="11" viewBox="0 0 10.5 11"><path d="M2.55 4.300h5.400l-2.700-3.200z M2.55 6.700h5.400l-2.700 3.200z" fill="#f0f0f0"/></svg>
<div class="fld" style="left:578px;width:34.5px;background:#a3a3a3;"><span style="position:relative;left:2px;"></span></div>
<svg class="a" style="left:624px;top:25px" width="22" height="13" viewBox="0 0 22 13"><rect x="2" y="1.800" width="9.500" height="9.500" fill="none" stroke="#dcdcdc" stroke-width="1" stroke-dasharray="1.500 1.400"/><circle cx="6.750" cy="6.550" r="2.800" fill="none" stroke="#cfcfcf" stroke-width="0.900" stroke-dasharray="1.200 0.800"/><circle cx="6.750" cy="6.550" r="1.100" fill="#dcdcdc"/><path d="M13 5.500h4.400l-2.200 2.800z" fill="#e6e6e6"/></svg>
<svg class="a" style="left:652.5px;top:25px" width="13" height="13" viewBox="0 0 13 13" fill="#d0d0d0"><g transform="translate(6.500 6.500) scale(0.860) translate(-6.500 -6.500)"><rect x="0.500" y="1" width="1.200" height="11"/><rect x="2.700" y="2" width="5" height="3.500" fill="none" stroke="#cdcdcd" stroke-width="0.9"/><rect x="2.500" y="7.500" width="8" height="3.500"/></g></svg>
<svg class="a" style="left:669.5px;top:25px" width="13" height="13" viewBox="0 0 13 13" fill="#d0d0d0"><g transform="translate(6.500 6.500) scale(0.860) translate(-6.500 -6.500)"><rect x="5.400" y="0.500" width="1.200" height="12"/><rect x="3.500" y="2" width="5" height="3.500" fill="#484848" stroke="#cdcdcd" stroke-width="0.9"/><rect x="1.500" y="7.500" width="9" height="3.500"/></g></svg>
<svg class="a" style="left:687.5px;top:25px" width="13" height="13" viewBox="0 0 13 13" fill="#d0d0d0"><g transform="translate(6.500 6.500) scale(0.860) translate(-6.500 -6.500)"><rect x="10.500" y="1" width="1.200" height="11"/><rect x="4.800" y="2" width="5" height="3.500" fill="none" stroke="#cdcdcd" stroke-width="0.9"/><rect x="1.500" y="7.500" width="8.500" height="3.500"/></g></svg>
<svg class="a" style="left:708px;top:25px" width="13" height="13" viewBox="0 0 13 13" fill="#d0d0d0"><g transform="translate(6.500 6.500) scale(0.860) translate(-6.500 -6.500)"><rect x="0.500" y="0.500" width="10" height="1.200"/><rect x="1.500" y="2.700" width="3.500" height="8" fill="none" stroke="#cdcdcd" stroke-width="0.9"/><rect x="6.500" y="2.500" width="3" height="5"/></g></svg>
<svg class="a" style="left:724.5px;top:25px" width="13" height="13" viewBox="0 0 13 13" fill="#d0d0d0"><g transform="translate(6.500 6.500) scale(0.860) translate(-6.500 -6.500)"><rect x="0" y="5.900" width="12" height="1.200"/><rect x="2" y="2.500" width="3.500" height="8" fill="#484848" stroke="#cdcdcd" stroke-width="0.9"/><rect x="7" y="4" width="3.500" height="5"/></g></svg>
<svg class="a" style="left:742.5px;top:25px" width="13" height="13" viewBox="0 0 13 13" fill="#d0d0d0"><g transform="translate(6.500 6.500) scale(0.860) translate(-6.500 -6.500)"><rect x="0.500" y="11.300" width="10.500" height="1.200"/><rect x="1.500" y="2.500" width="3.500" height="8" fill="none" stroke="#cdcdcd" stroke-width="0.9"/><rect x="6.500" y="6" width="3" height="5"/></g></svg>
<svg class="a" style="left:762px;top:25px" width="13" height="13" viewBox="0 0 13 13" fill="#d0d0d0"><g transform="translate(6.500 6.500) scale(0.860) translate(-6.500 -6.500)"><rect x="0.500" y="1" width="12" height="1.200"/><rect x="0.500" y="7" width="12" height="1.200"/><rect x="2.500" y="2.700" width="8" height="3"/><rect x="3.700" y="8.700" width="5.500" height="2.600" fill="none" stroke="#cdcdcd" stroke-width="0.9"/></g></svg>
<svg class="a" style="left:779.5px;top:25px" width="13" height="13" viewBox="0 0 13 13" fill="#d0d0d0"><g transform="translate(6.500 6.500) scale(0.860) translate(-6.500 -6.500)"><rect x="0.500" y="3.200" width="12" height="1.200"/><rect x="0.500" y="8.700" width="12" height="1.200"/><rect x="2.500" y="2" width="8" height="3.500"/><rect x="3.700" y="7.700" width="5.500" height="3" fill="#484848" stroke="#cdcdcd" stroke-width="0.9"/></g></svg>
<svg class="a" style="left:797px;top:25px" width="13" height="13" viewBox="0 0 13 13" fill="#d0d0d0"><g transform="translate(6.500 6.500) scale(0.860) translate(-6.500 -6.500)"><rect x="0.500" y="5" width="12" height="1.200"/><rect x="0.500" y="11" width="12" height="1.200"/><rect x="2.500" y="1.700" width="8" height="3"/><rect x="3.700" y="7.200" width="5.500" height="3" fill="none" stroke="#cdcdcd" stroke-width="0.9"/></g></svg>
<svg class="a" style="left:819px;top:25px" width="13" height="13" viewBox="0 0 13 13" fill="#d0d0d0"><g transform="translate(6.500 6.500) scale(0.860) translate(-6.500 -6.500)"><rect x="1" y="0.500" width="1.200" height="12"/><rect x="7" y="0.500" width="1.200" height="12"/><rect x="2.500" y="2" width="3" height="8.500"/><rect x="8.700" y="3.700" width="2.600" height="5" fill="none" stroke="#cdcdcd" stroke-width="0.9"/></g></svg>
<svg class="a" style="left:836.5px;top:25px" width="13" height="13" viewBox="0 0 13 13" fill="#d0d0d0"><g transform="translate(6.500 6.500) scale(0.860) translate(-6.500 -6.500)"><rect x="2.700" y="0.500" width="1.200" height="12"/><rect x="8.700" y="0.500" width="1.200" height="12"/><rect x="1.500" y="2.500" width="3.500" height="8"/><rect x="7.700" y="3.700" width="3" height="5.500" fill="#484848" stroke="#cdcdcd" stroke-width="0.9"/></g></svg>
<svg class="a" style="left:852.5px;top:25px" width="13" height="13" viewBox="0 0 13 13" fill="#d0d0d0"><g transform="translate(6.500 6.500) scale(0.860) translate(-6.500 -6.500)"><rect x="4.500" y="0.500" width="1.200" height="12"/><rect x="10.500" y="0.500" width="1.200" height="12"/><rect x="1.500" y="3.700" width="2.600" height="5" fill="none" stroke="#cdcdcd" stroke-width="0.9"/><rect x="6.500" y="2" width="3.500" height="8.500"/></g></svg>
<div class="sep" style="left:870px;"></div>
<svg class="a" style="left:874px;top:24.500px" width="15" height="14" viewBox="0 0 15 14"><rect x="0.9" y="0.9" width="2.7" height="2.7" fill="none" stroke="#d8d8d8" stroke-width="0.8"/><rect x="0.9" y="5.6000000000000005" width="2.7" height="2.7" fill="none" stroke="#d8d8d8" stroke-width="0.8"/><rect x="0.9" y="10.3" width="2.7" height="2.7" fill="none" stroke="#d8d8d8" stroke-width="0.8"/><rect x="5.9" y="0.9" width="2.7" height="2.7" fill="none" stroke="#d8d8d8" stroke-width="0.8"/><rect x="5.9" y="5.6000000000000005" width="2.7" height="2.7" fill="none" stroke="#d8d8d8" stroke-width="0.8"/><rect x="5.9" y="10.3" width="2.7" height="2.7" fill="none" stroke="#d8d8d8" stroke-width="0.8"/><rect x="10.9" y="0.9" width="2.7" height="2.7" fill="none" stroke="#d8d8d8" stroke-width="0.8"/><rect x="10.9" y="5.6000000000000005" width="2.7" height="2.7" fill="none" stroke="#d8d8d8" stroke-width="0.8"/><rect x="10.9" y="10.3" width="2.7" height="2.7" fill="none" stroke="#d8d8d8" stroke-width="0.8"/><path d="M4 2.250h1.500M9 2.250h1.500M4 6.950h1.500M9 6.950h1.500M4 11.650h1.500M9 11.650h1.500M2.250 4v1.500M7.250 4v1.500M12.250 4v1.500M2.250 8.700v1.500M7.250 8.700v1.500M12.250 8.700v1.500" stroke="#8a8a8a" stroke-width="0.700"/></svg>
<div class="t or" style="left:894.5px;top:25px;">X:</div>
<div class="btn" style="left:907px;width:10.5px;height:5px;"></div><div class="btn" style="left:907px;top:32px;width:10.5px;height:5px;"></div>
<svg class="a" style="left:907px;top:26px" width="10.5" height="11" viewBox="0 0 10.5 11"><path d="M2.55 4.300h5.400l-2.700-3.200z M2.55 6.700h5.400l-2.700 3.200z" fill="#f0f0f0"/></svg>
<div class="fld" style="left:918px;width:37.5px;background:#a3a3a3;"><span style="position:relative;left:2px;">374.102 p</span></div>
<div class="t or" style="left:961px;top:25px;">Y:</div>
<div class="btn" style="left:974px;width:10.5px;height:5px;"></div><div class="btn" style="left:974px;top:32px;width:10.5px;height:5px;"></div>
<svg class="a" style="left:974px;top:26px" width="10.5" height="11" viewBox="0 0 10.5 11"><path d="M2.55 4.300h5.400l-2.700-3.200z M2.55 6.700h5.400l-2.700 3.200z" fill="#f0f0f0"/></svg>
<div class="fld" style="left:985px;width:37.5px;background:#a3a3a3;"><span style="position:relative;left:2px;">442.262 p</span></div>
<div class="t or" style="left:1028px;top:25px;">宽 :</div>
<div class="btn" style="left:1046.5px;width:10.5px;height:5px;"></div><div class="btn" style="left:1046.5px;top:32px;width:10.5px;height:5px;"></div>
<svg class="a" style="left:1046.5px;top:26px" width="10.5" height="11" viewBox="0 0 10.5 11"><path d="M2.55 4.300h5.400l-2.700-3.200z M2.55 6.700h5.400l-2.700 3.200z" fill="#f0f0f0"/></svg>
<div class="fld" style="left:1057.5px;width:37.5px;background:#a3a3a3;"><span style="position:relative;left:2px;">463.652 p</span></div>
<svg class="a" style="left:1102px;top:26px" width="12" height="11" viewBox="0 0 12 11"><path d="M4.500 2.500h-1a3 3 0 0 0 0 6h1M7.500 2.500h1a3 3 0 0 1 0 6h-1M3.500 5.500h5" fill="none" stroke="#d0d0d0" stroke-width="1.200" stroke-dasharray="2 1"/></svg>
<div class="t or" style="left:1120px;top:25px;">高 :</div>
<div class="btn" style="left:1139px;width:10.5px;height:5px;"></div><div class="btn" style="left:1139px;top:32px;width:10.5px;height:5px;"></div>
<svg class="a" style="left:1139px;top:26px" width="10.5" height="11" viewBox="0 0 10.5 11"><path d="M2.55 4.300h5.400l-2.700-3.200z M2.55 6.700h5.400l-2.700 3.200z" fill="#f0f0f0"/></svg>
<div class="fld" style="left:1150px;width:37.5px;background:#a3a3a3;"><span style="position:relative;left:2px;">358.72 px</span></div>
<svg class="a" style="left:1193px;top:25px" width="26" height="13" viewBox="0 0 26 13"><rect x="1" y="3.500" width="8" height="6" fill="none" stroke="#c8c8c8" stroke-dasharray="1.500 1"/><rect x="6" y="1.500" width="5" height="5" fill="#8a8a8a"/><path d="M7 3.500v8l2-2 1.500 3 1.200-0.600-1.500-2.800h2.600z" fill="#e8e8e8" stroke="#444" stroke-width="0.500"/><path d="M17 4.500h6l-3 4z" fill="#f0f0f0"/></svg>
<svg class="a" style="left:1258px;top:26px" width="12" height="11" viewBox="0 0 12 11"><path d="M0.500 5.500l3-2v4z" fill="#dcdcdc"/><path d="M4.500 2.500h7M4.500 5.500h7M4.500 8.500h7" stroke="#dcdcdc" stroke-width="1.200"/></svg>

<!-- ====== tabs ====== -->
<div class="a" id="tabbar"></div>
<div class="a" id="tabline"></div>
<div class="a" style="left:49px;top:43.500px;width:1205px;height:12.500px;overflow:hidden;">
<div class="tab" style="left:0;width:200.500px;"><span style="left:6px;">桌子+植物+人物.ai* @ 50% (CMYK/GPU 预览)</span><span style="left:191px;color:#e0e0e0;font-size:7px;">✕</span></div>
<div class="tab" style="left:201.500px;width:206px;"><span style="left:7.500px;">桌子+植物+人物.ai* @ 200% (CMYK/GPU 预览)</span><span style="left:197px;color:#e0e0e0;font-size:7px;">✕</span></div>
<div class="tab" style="left:408.500px;width:190.500px;"><span style="left:7px;">桌子 [已恢复].ai @ 200% (CMYK/GPU 预览)</span><span style="left:181px;color:#e0e0e0;font-size:7px;">✕</span></div>
<div class="tab on" style="left:600px;width:173.500px;"><span style="left:6px;">未标题-1.ai @ 200% (CMYK/GPU 预览)</span><span style="left:164px;color:#e0e0e0;font-size:7px;">✕</span></div>
</div>

<!-- ====== left tools ====== -->
<div class="a" id="tools"></div>
<div class="a" style="left:0;top:43px;width:1px;height:650px;background:#2c2c2c;"></div>
<div class="a" style="left:1px;top:43px;width:46px;height:7.500px;background:#363636;"></div>
<div class="a" style="left:1px;top:50.500px;width:46px;height:1px;background:#2e2e2e;"></div>
<div class="a" style="left:1px;top:51.500px;width:46px;height:1px;background:#575757;"></div>
<div class="a" style="left:47px;top:43px;width:2.300px;height:650px;background:#393939;"></div>
<svg class="a" style="left:2px;top:44.500px" width="8" height="6" viewBox="0 0 8 6"><path d="M3.500 0.500v4.500l-2.600-2.250z M6.700 0.500v4.500l-2.600-2.250z" fill="#e8e8e8"/></svg>
<div class="a" style="left:17px;top:53px;width:13.500px;height:3px;background:#2e2e2e;"></div>
<div class="a" style="left:25px;top:63px;width:18px;height:14px;background:#363636;box-shadow:inset 0 0 0 1px #2a2a2a;"></div>
<div class="a" style="left:4px;top:94.2px;width:40px;height:1px;background:#3b3b3b;"></div>
<div class="a" style="left:4px;top:159px;width:40px;height:1px;background:#3b3b3b;"></div>
<div class="a" style="left:4px;top:208.5px;width:40px;height:1px;background:#3b3b3b;"></div>
<div class="a" style="left:4px;top:242.3px;width:40px;height:1px;background:#3b3b3b;"></div>
<div class="a" style="left:4px;top:259.2px;width:40px;height:1px;background:#3b3b3b;"></div>
<div class="a" style="left:4px;top:292.8px;width:40px;height:1px;background:#3b3b3b;"></div>
<svg class="a" style="left:5px;top:61.5px" width="18" height="17" viewBox="0 0 18 17" fill="#d2d2d2" stroke="none"><g transform="translate(9 8.500) scale(0.860) translate(-9 -8.500)"><path d="M5.500 2.500v11l2.600-2.500 1.700 3.800 1.700-0.800-1.700-3.600h3.500z" fill="#2f2f2f" stroke="#d6d6d6" stroke-width="1"/></g></svg>
<svg class="a" style="left:25px;top:61.5px" width="18" height="17" viewBox="0 0 18 17" fill="#d2d2d2" stroke="none"><g transform="translate(9 8.500) scale(0.860) translate(-9 -8.500)"><path d="M6 2v11l2.700-2.600 1.800 3.800 1.500-0.700-1.800-3.700h3.700z" fill="#cfcfcf"/></g><path d="M17.800 12.800v2.700h-2.700z" fill="#e0e0e0"/></svg>
<svg class="a" style="left:5px;top:78px" width="18" height="17" viewBox="0 0 18 17" fill="#d2d2d2" stroke="none"><g transform="translate(9 8.500) scale(0.860) translate(-9 -8.500)"><path d="M8 7.500l6.500 6.500" stroke="#dadada" stroke-width="1.800"/><path d="M6.500 1.500l1 3 3-1-1.800 2.600 2.300 2-3.200 0.200-0.600 3.200-1.600-2.800-3.100 0.800 2.100-2.400-1.600-2.800 3 1.100z"/></g></svg>
<svg class="a" style="left:25px;top:78px" width="18" height="17" viewBox="0 0 18 17" fill="#d2d2d2" stroke="none"><g transform="translate(9 8.500) scale(0.860) translate(-9 -8.500)"><ellipse cx="8.500" cy="6.500" rx="5.500" ry="3.800" stroke="#d2d2d2" fill="none" stroke-width="1.500"/><path d="M5.500 9.500c-1 1.500-0.500 3 1 3.500" stroke="#d2d2d2" fill="none" stroke-width="1.300"/><path d="M9 5.500v8l2-1.800 1.300 2.800 1.300-0.600-1.300-2.700h2.700z" fill="#dadada" stroke="#4a4a4a" stroke-width="0.600"/></g></svg>
<svg class="a" style="left:5px;top:95px" width="18" height="17" viewBox="0 0 18 17" fill="#d2d2d2" stroke="none"><g transform="translate(9 8.500) scale(0.860) translate(-9 -8.500)"><path d="M10.500 1.500l4 4-1.500 1.500-4-4z"/><path d="M8.500 3.500l4 4-1.500 4.500-8 3 3-8z"/><path d="M3.500 14.500l4-4" stroke="#4a4a4a" stroke-width="0.900"/><circle cx="8" cy="10" r="1" fill="#4a4a4a"/></g><path d="M17.800 12.800v2.700h-2.700z" fill="#e0e0e0"/></svg>
<svg class="a" style="left:25px;top:95px" width="18" height="17" viewBox="0 0 18 17" fill="#d2d2d2" stroke="none"><g transform="translate(9 8.500) scale(0.860) translate(-9 -8.500)"><g transform="translate(3.500,0) scale(0.850)"><path d="M10.500 1.500l4 4-1.500 1.500-4-4z"/><path d="M8.500 3.500l4 4-1.500 4.500-8 3 3-8z"/><path d="M3.500 14.500l4-4" stroke="#4a4a4a" stroke-width="0.900"/><circle cx="8" cy="10" r="1" fill="#4a4a4a"/></g><path d="M1.500 5.500c2 1 2.500 3 1 5s-1 3.500 1.500 4" stroke="#d2d2d2" fill="none" stroke-width="1.200"/></g></svg>
<svg class="a" style="left:5px;top:111px" width="18" height="17" viewBox="0 0 18 17" fill="#d2d2d2" stroke="none"><g transform="translate(9 8.500) scale(0.860) translate(-9 -8.500)"><g transform="translate(8.500 8) scale(0.880) translate(-8.500 -8.500)"><path d="M3.500 2.500h10v3h-1c-0.200-1.300-0.700-1.800-2-1.800h-0.800v8.800c0 0.800 0.400 1 1.500 1v1h-5.400v-1c1.100 0 1.500-0.200 1.500-1v-8.800h-0.800c-1.300 0-1.800 0.500-2 1.800h-1z"/></g></g><path d="M17.800 12.800v2.700h-2.700z" fill="#e0e0e0"/></svg>
<svg class="a" style="left:25px;top:111px" width="18" height="17" viewBox="0 0 18 17" fill="#d2d2d2" stroke="none"><g transform="translate(9 8.500) scale(0.860) translate(-9 -8.500)"><path d="M3.500 13.500l10-10" stroke="#dadada" stroke-width="1.300"/></g><path d="M17.800 12.800v2.700h-2.700z" fill="#e0e0e0"/></svg>
<svg class="a" style="left:5px;top:127.5px" width="18" height="17" viewBox="0 0 18 17" fill="#d2d2d2" stroke="none"><g transform="translate(9 8.500) scale(0.860) translate(-9 -8.500)"><rect x="3" y="2.500" width="11.500" height="11" fill="#8a8a8a" stroke="#d2d2d2" stroke-width="1.100"/><path d="M4 5h9.500M4 7h9.500M4 9h9.500M4 11h9.500" stroke="#777" stroke-width="0.700"/></g><path d="M17.800 12.800v2.700h-2.700z" fill="#e0e0e0"/></svg>
<svg class="a" style="left:25px;top:127.5px" width="18" height="17" viewBox="0 0 18 17" fill="#d2d2d2" stroke="none"><g transform="translate(9 8.500) scale(0.860) translate(-9 -8.500)"><path d="M14.500 1.500l-7 7.500 1.500 1.500 6.500-8z"/><path d="M7 9.500c-1.500-0.300-2.800 0.500-3 2-0.200 1.200-0.800 1.800-2 2 2 1 5.500 0.800 6.500-2.200z"/></g><path d="M17.800 12.800v2.700h-2.700z" fill="#e0e0e0"/></svg>
<svg class="a" style="left:5px;top:144px" width="18" height="17" viewBox="0 0 18 17" fill="#d2d2d2" stroke="none"><g transform="translate(9 8.500) scale(0.860) translate(-9 -8.500)"><path d="M11.500 2l2.500 2.500-7.500 7.500-3.500 1.500 1-3.800z"/><path d="M10.300 3.300l2.500 2.500" stroke="#4a4a4a" stroke-width="0.800"/><path d="M4.200 10l2.200 2.200" stroke="#4a4a4a" stroke-width="0.700"/></g><path d="M17.800 12.800v2.700h-2.700z" fill="#e0e0e0"/></svg>
<svg class="a" style="left:25px;top:144px" width="18" height="17" viewBox="0 0 18 17" fill="#d2d2d2" stroke="none"><g transform="translate(9 8.500) scale(0.860) translate(-9 -8.500)"><path d="M7.500 4h7l-3.500 5h-7z" fill="#dadada"/><path d="M4 9.500h7v3h-7z M11 9.500l3.500-5v3l-3.500 5z" fill="#b8b8b8" stroke="#dadada" stroke-width="0.700"/></g><path d="M17.800 12.800v2.700h-2.700z" fill="#e0e0e0"/></svg>
<svg class="a" style="left:5px;top:160.5px" width="18" height="17" viewBox="0 0 18 17" fill="#d2d2d2" stroke="none"><g transform="translate(9 8.500) scale(0.860) translate(-9 -8.500)"><circle cx="8.500" cy="8.500" r="5" stroke="#d2d2d2" fill="none" stroke-width="1.300" stroke-dasharray="2.200 1.600"/><path d="M2 4.500l2.500 3.500 2-3z"/></g><path d="M17.800 12.800v2.700h-2.700z" fill="#e0e0e0"/></svg>
<svg class="a" style="left:25px;top:160.5px" width="18" height="17" viewBox="0 0 18 17" fill="#d2d2d2" stroke="none"><g transform="translate(9 8.500) scale(0.860) translate(-9 -8.500)"><rect x="3" y="7" width="7" height="6.500" stroke="#d2d2d2" fill="none" stroke-width="1.100"/><rect x="6.500" y="2.500" width="8" height="7.500" stroke="#d2d2d2" fill="none" stroke-width="1.100"/><path d="M9.500 7.500l3.500-3.500M13.500 3.500v3l-3-3z" stroke="#dadada" stroke-width="0.900"/></g><path d="M17.800 12.800v2.700h-2.700z" fill="#e0e0e0"/></svg>
<svg class="a" style="left:5px;top:177px" width="18" height="17" viewBox="0 0 18 17" fill="#d2d2d2" stroke="none"><g transform="translate(9 8.500) scale(0.860) translate(-9 -8.500)"><path d="M2.500 13.500c2.500-0.500 3.500-2.500 4.500-4.500s1.500-5.500-0.500-5.500-2 3.500 0.500 5.500 4 5.500 8 2.500" stroke="#d2d2d2" fill="none" stroke-width="1.700"/><path d="M3 6.500l3.500 2.500M9.500 6l-2.500 3" stroke="#d2d2d2" fill="none" stroke-width="1"/><circle cx="2.500" cy="13.500" r="1.300"/><circle cx="6.300" cy="3.300" r="1.200"/></g><path d="M17.800 12.800v2.700h-2.700z" fill="#e0e0e0"/></svg>
<svg class="a" style="left:25px;top:177px" width="18" height="17" viewBox="0 0 18 17" fill="#d2d2d2" stroke="none"><g transform="translate(9 8.500) scale(0.860) translate(-9 -8.500)"><rect x="5.500" y="3.500" width="9" height="9" stroke="#d2d2d2" fill="none" stroke-width="1.200" stroke-dasharray="1.800 1.500"/><path d="M2.500 3v9l6-4.500z"/></g></svg>
<svg class="a" style="left:5px;top:192.5px" width="18" height="17" viewBox="0 0 18 17" fill="#d2d2d2" stroke="none"><g transform="translate(9 8.500) scale(0.860) translate(-9 -8.500)"><circle cx="6.500" cy="6" r="4" stroke="#d2d2d2" fill="none" stroke-width="1.100"/><circle cx="9" cy="8" r="3.500" stroke="#d2d2d2" fill="none" stroke-width="1.100"/><path d="M9.500 6.500v8l2-1.800 1.200 2.500 1.200-0.600-1.200-2.400h2.500z" stroke="#4a4a4a" stroke-width="0.500"/></g><path d="M17.800 12.800v2.700h-2.700z" fill="#e0e0e0"/></svg>
<svg class="a" style="left:25px;top:192.5px" width="18" height="17" viewBox="0 0 18 17" fill="#d2d2d2" stroke="none"><g transform="translate(9 8.500) scale(0.860) translate(-9 -8.500)"><path d="M3.500 2v10.500l10.500 2M3.500 12.500l4.500-2.500v-8M8 10l6 2.500M5.700 3v8.300M3.500 5.500l4.500-0.500M3.500 9l4.500-1M8 6l4 5.500M8 3l2.500 8.500" stroke="#d2d2d2" fill="none" stroke-width="1"/><path d="M3.500 2.500l4.500-0.500v8l-4.500 2.500z" fill="#9a9a9a" opacity="0.600"/></g><path d="M17.800 12.800v2.700h-2.700z" fill="#e0e0e0"/></svg>
<svg class="a" style="left:5px;top:210px" width="18" height="17" viewBox="0 0 18 17" fill="#d2d2d2" stroke="none"><g transform="translate(9 8.500) scale(0.860) translate(-9 -8.500)"><rect x="2.500" y="4" width="12" height="9" fill="#3a3a3a" stroke="#d2d2d2" stroke-width="1"/><path d="M2.500 8c3-2 4 2 6 0s3-2 6 1M6.500 4c1.500 3-1.500 6 0.500 9M10.500 4c1 3-1 6 1 9" stroke="#e0e0e0" stroke-width="1.100" fill="none"/><circle cx="6.500" cy="8" r="1.100" fill="#f0f0f0"/><circle cx="10.800" cy="8" r="1.100" fill="#f0f0f0"/></g></svg>
<svg class="a" style="left:25px;top:210px" width="18" height="17" viewBox="0 0 18 17"><defs><linearGradient id="gr1"><stop offset="0" stop-color="#333"/><stop offset="1" stop-color="#e8e8e8"/></linearGradient></defs><rect x="3.700" y="4.300" width="10.700" height="8.200" fill="url(#gr1)" stroke="#d2d2d2" stroke-width="1"/></svg>
<svg class="a" style="left:5px;top:226.5px" width="18" height="17" viewBox="0 0 18 17" fill="#d2d2d2" stroke="none"><g transform="translate(9 8.500) scale(0.860) translate(-9 -8.500)"><path d="M12.500 1.200c1.800-0.300 3.300 1.200 3 3l-2.800 2.800 0.900 0.900-1.500 1.500-0.900-0.900-5.700 5.700-2.800 1.300-0.700-0.700 1.300-2.800 5.700-5.700-0.900-0.900 1.500-1.500 0.900 0.900z"/><path d="M4.500 13l5.200-5.200" stroke="#4a4a4a" stroke-width="0.900"/></g><path d="M17.800 12.800v2.700h-2.700z" fill="#e0e0e0"/></svg>
<svg class="a" style="left:25px;top:226.5px" width="18" height="17" viewBox="0 0 18 17" fill="#d2d2d2" stroke="none"><g transform="translate(9 8.500) scale(0.860) translate(-9 -8.500)"><rect x="3" y="3" width="6" height="6" fill="#dadada"/><rect x="5.500" y="5.500" width="6" height="6" fill="#4a4a4a" stroke="#dadada" stroke-width="1"/><circle cx="11.500" cy="11" r="3.300" fill="#4a4a4a" stroke="#dadada" stroke-width="1.100"/></g></svg>
<svg class="a" style="left:5px;top:243px" width="18" height="17" viewBox="0 0 18 17" fill="#d2d2d2" stroke="none"><g transform="translate(9 8.500) scale(0.860) translate(-9 -8.500)"><rect x="6.500" y="6" width="7" height="8.500" rx="1" fill="#dadada"/><rect x="8" y="3" width="4" height="3"/><circle cx="10" cy="10" r="2" fill="#4a4a4a"/><circle cx="10" cy="10" r="0.900"/><circle cx="4" cy="3" r="0.800"/><circle cx="2.500" cy="5" r="0.700"/><circle cx="5.500" cy="5" r="0.700"/><circle cx="6" cy="2" r="0.700"/></g><path d="M17.800 12.800v2.700h-2.700z" fill="#e0e0e0"/></svg>
<svg class="a" style="left:25px;top:243px" width="18" height="17" viewBox="0 0 18 17" fill="#d2d2d2" stroke="none"><g transform="translate(9 8.500) scale(0.860) translate(-9 -8.500)"><rect x="3.500" y="4" width="2.500" height="9"/><rect x="7.500" y="7.500" width="2.500" height="5.500"/><rect x="11.500" y="5.500" width="2.500" height="7.500"/><path d="M3 2.500v11h12" stroke="#d2d2d2" fill="none" stroke-width="0.900"/></g><path d="M17.800 12.800v2.700h-2.700z" fill="#e0e0e0"/></svg>
<svg class="a" style="left:5px;top:260.5px" width="18" height="17" viewBox="0 0 18 17" fill="#d2d2d2" stroke="none"><g transform="translate(9 8.500) scale(0.860) translate(-9 -8.500)"><rect x="5" y="5" width="8" height="7" fill="#858585" stroke="#d2d2d2" stroke-width="1"/><path d="M1.500 5h2.300M14.200 5h2.300M1.500 12h2.300M14.200 12h2.300M5 1.500v2.300M5 13.200v2.300M13 1.500v2.300M13 13.200v2.300M1.500 8.500h1.500M15 8.500h1.500M9 1.500v1.500M9 14v1.500" stroke="#d2d2d2" stroke-width="1.100"/></g></svg>
<svg class="a" style="left:25px;top:260.5px" width="18" height="17" viewBox="0 0 18 17" fill="#d2d2d2" stroke="none"><g transform="translate(9 8.500) scale(0.860) translate(-9 -8.500)"><path d="M15.500 1.500c-1.500 0.300-3 1.300-4 2.500l2.300 2.200c0.900-1.400 1.500-3 1.700-4.700z"/><path d="M11 4.500l-8.500 9.500c4-1.500 8-4 10.500-7.500z"/><path d="M10.300 5.300l2.300 2.200" stroke="#4a4a4a" stroke-width="0.800"/></g><path d="M17.800 12.800v2.700h-2.700z" fill="#e0e0e0"/></svg>
<svg class="a" style="left:5px;top:277px" width="18" height="17" viewBox="0 0 18 17" fill="#d2d2d2" stroke="none"><g transform="translate(9 8.500) scale(0.860) translate(-9 -8.500)"><path d="M6.300 15.500c-1.200-1.700-3.300-4.200-4.200-5.800-0.600-1 0.700-1.800 1.600-0.900l1.500 1.600v-6.200c0-1.200 1.500-1.200 1.500 0v-1.700c0-1.200 1.700-1.200 1.700 0v1.200c0-1.200 1.700-1.200 1.700 0v1.600c0-1.100 1.600-1.100 1.600 0v6c0 1.600-0.500 3.100-1 4.200z"/><path d="M6.700 4.200v4.500M8.400 3.700v5M10.100 4.800v4" stroke="#4a4a4a" stroke-width="0.800"/></g><path d="M17.800 12.800v2.700h-2.700z" fill="#e0e0e0"/></svg>
<svg class="a" style="left:25px;top:277px" width="18" height="17" viewBox="0 0 18 17" fill="#d2d2d2" stroke="none"><g transform="translate(9 8.500) scale(0.860) translate(-9 -8.500)"><circle cx="7" cy="6.500" r="3.600" fill="#858585" stroke="#d2d2d2" stroke-width="1.400"/><path d="M9.800 9.500l4.200 4.500" stroke="#d2d2d2" stroke-width="2" stroke-linecap="round"/></g></svg>
<svg class="a" style="left:33px;top:296.500px" width="8" height="7" viewBox="0 0 8 7"><path d="M1.500 2.500c1.500-1.200 3.500-1 4.500 0.500v2.500" fill="none" stroke="#626262" stroke-width="1"/><path d="M4.200 4.800h3.600l-1.800 2.200zM3 0.500l-2.500 1.800 2.800 1.200z" fill="#626262"/></svg>
<svg class="a" style="left:16.500px;top:307.500px" width="24" height="24" viewBox="0 0 24 24"><rect width="23.500" height="23.500" fill="#fff"/><rect x="6.500" y="6.500" width="10" height="10" fill="#3c3c3c"/><path d="M0.500 23L23 0.500" stroke="#f0141e" stroke-width="1.500"/></svg>
<div class="a" style="left:4.500px;top:296px;width:23.500px;height:22.500px;background:#3f3f3f;box-shadow:inset 0 0 0 1px #555,0 0 0 0.500px #2e2e2e;"></div>
<div class="t" style="left:13.500px;top:302px;font-size:9px;font-weight:bold;color:#f0e6d8;">?</div>
<svg class="a" style="left:3.500px;top:323.500px" width="9" height="9" viewBox="0 0 9 9"><rect x="3" y="3" width="5.500" height="5.500" fill="#4a4a4a" stroke="#e0e0e0" stroke-width="1"/><rect x="0.500" y="0.500" width="5" height="5" fill="#fff" stroke="#222" stroke-width="0.800"/></svg>
<div class="a" style="left:4.500px;top:336.500px;width:39px;height:12px;background:#3a3a3a;"></div>
<div class="a" style="left:17.500px;top:336.500px;width:1px;height:12px;background:#4e4e4e;"></div><div class="a" style="left:30.500px;top:336.500px;width:1px;height:12px;background:#4e4e4e;"></div>
<div class="a" style="left:7.500px;top:339px;width:8px;height:7px;background:#fff;box-shadow:0 0 0 1px #1c1c1c;"></div>
<div class="a" style="left:20.500px;top:339px;width:8px;height:7px;background:linear-gradient(90deg,#f4f4f4,#333);box-shadow:0 0 0 1px #1c1c1c;"></div>
<svg class="a" style="left:33.500px;top:339px;box-shadow:0 0 0 1px #1c1c1c" width="8" height="7" viewBox="0 0 9 8" preserveAspectRatio="none"><rect width="9" height="8" fill="#fff"/><path d="M0 8L9 0" stroke="#f0141e" stroke-width="2.200"/></svg>
<div class="a" style="left:4.500px;top:353.500px;width:39px;height:10.500px;background:#606060;box-shadow:0 0 0 0.500px #3a3a3a;"></div>
<div class="a" style="left:4.500px;top:353.500px;width:13px;height:10.500px;background:#363636;"></div>
<svg class="a" style="left:6px;top:354px" width="36" height="10" viewBox="0 0 36 10"><circle cx="5.500" cy="4.500" r="3" fill="none" stroke="#e6e6e6" stroke-width="1.100"/><rect x="6" y="5.500" width="3.500" height="3.500" fill="#e6e6e6"/><circle cx="17.500" cy="4.500" r="3" fill="none" stroke="#d6d6d6" stroke-width="1.100"/><path d="M17 8.500h4.500v-3.500" fill="none" stroke="#d6d6d6" stroke-width="1"/><circle cx="30.500" cy="4.500" r="3" fill="none" stroke="#7c7c7c" stroke-width="1.100"/><path d="M30.500 3v2.500h2" fill="none" stroke="#7c7c7c" stroke-width="0.800"/></svg>
<svg class="a" style="left:15.500px;top:370px" width="16" height="12" viewBox="0 0 16 12"><rect x="4.500" y="0.800" width="10" height="7" fill="#8e8e8e" stroke="#e6e6e6" stroke-width="1"/><rect x="1" y="3.500" width="9.500" height="7" fill="#4a4a4a" stroke="#e6e6e6" stroke-width="1"/></svg>
<div class="a" style="left:-19px;top:460px;width:29px;height:29px;border-radius:50%;border:1.500px solid #f4f4f4;background:linear-gradient(180deg,#62d86e 0%,#3cc653 50%,#27ad43 100%);box-shadow:0 1px 3px rgba(0,0,0,0.550);"></div>
<div class="t" style="left:0.500px;top:470px;font-size:7.500px;font-weight:bold;color:#fff;">59</div>

<!-- ====== right ====== -->
<div class="a" id="vscroll"></div>
<div class="a" id="rpanel"></div>
<svg class="a" style="left:1243px;top:59px" width="10" height="7" viewBox="0 0 10 7"><path d="M1 6h8l-4-5z" fill="#f0f0f0"/></svg>
<svg class="a" style="left:1243px;top:673px" width="10" height="7" viewBox="0 0 10 7"><path d="M1 1h8l-4 5z" fill="#f0f0f0"/></svg>
<div class="a" style="left:1242.800px;top:366px;width:10px;height:10px;background:#9b9b9b;box-shadow:inset 0 0 0 0.500px #b4b4b4;"></div>
<div class="a" style="left:1242px;top:683.500px;width:12px;height:9.500px;background:#454545;"></div>
<div class="a" style="left:1252.800px;top:43px;width:2.200px;height:650px;background:#464646;"></div><div class="a" style="left:1254.400px;top:50px;width:0.800px;height:643px;background:#333;"></div>
<div class="a" style="left:1255px;top:43px;width:25px;height:7.500px;background:#363636;"></div>
<div class="a" style="left:1255px;top:50.500px;width:25px;height:1px;background:#2e2e2e;"></div>
<svg class="a" style="left:1271px;top:44.500px" width="8" height="6" viewBox="0 0 8 6"><path d="M3.500 0.500v4.500l-2.600-2.250z M6.700 0.500v4.500l-2.600-2.250z" fill="#e8e8e8"/></svg>
<div class="a" style="left:1255px;top:466px;width:25px;height:1px;background:#333;"></div>
<div class="a" style="left:1255px;top:467px;width:25px;height:226px;background:#464646;"></div>
<div class="a" style="left:1261px;top:53px;width:13px;height:2.500px;background:#2c2c2c;"></div>
<div class="a" style="left:1261px;top:99.2px;width:13px;height:2.500px;background:#2c2c2c;"></div>
<div class="a" style="left:1261px;top:164.2px;width:13px;height:2.500px;background:#2c2c2c;"></div>
<div class="a" style="left:1261px;top:229px;width:13px;height:2.500px;background:#2c2c2c;"></div>
<div class="a" style="left:1261px;top:293.2px;width:13px;height:2.500px;background:#2c2c2c;"></div>
<div class="a" style="left:1261px;top:339.4px;width:13px;height:2.500px;background:#2c2c2c;"></div>
<div class="a" style="left:1261px;top:404.4px;width:13px;height:2.500px;background:#2c2c2c;"></div>
<div class="a" style="left:1255px;top:97px;width:25px;height:1px;background:#333;"></div>
<div class="a" style="left:1255px;top:98px;width:25px;height:1px;background:#555;"></div>
<div class="a" style="left:1255px;top:161px;width:25px;height:1px;background:#333;"></div>
<div class="a" style="left:1255px;top:162px;width:25px;height:1px;background:#555;"></div>
<div class="a" style="left:1255px;top:227px;width:25px;height:1px;background:#333;"></div>
<div class="a" style="left:1255px;top:228px;width:25px;height:1px;background:#555;"></div>
<div class="a" style="left:1255px;top:291px;width:25px;height:1px;background:#333;"></div>
<div class="a" style="left:1255px;top:292px;width:25px;height:1px;background:#555;"></div>
<div class="a" style="left:1255px;top:336.5px;width:25px;height:1px;background:#333;"></div>
<div class="a" style="left:1255px;top:337.5px;width:25px;height:1px;background:#555;"></div>
<div class="a" style="left:1255px;top:401.5px;width:25px;height:1px;background:#333;"></div>
<div class="a" style="left:1255px;top:402.5px;width:25px;height:1px;background:#555;"></div>
<svg class="a" style="left:1259.500px;top:59.5px" width="16" height="16" viewBox="0 0 16 16" fill="#d6d6d6"><g transform="translate(8 8) scale(0.900) translate(-8 -8)"><path d="M8 2.500c-4 0-7 2.300-7 5.300 0 2.700 2.500 4.700 6 4.700 1.200 0 1.500-0.600 1.200-1.300-0.400-1 0.300-1.700 1.600-1.700h2.200c1.800 0 3-0.800 3-2.200 0-2.800-3-4.800-7-4.800z"/><circle cx="4" cy="7" r="1.100" fill="#484848"/><circle cx="6.500" cy="4.800" r="1.100" fill="#484848"/><circle cx="10" cy="4.800" r="1.100" fill="#484848"/><circle cx="12.500" cy="6.800" r="1.100" fill="#484848"/><circle cx="5" cy="10" r="1.100" fill="#484848"/></g></svg>
<svg class="a" style="left:1259px;top:78px" width="16" height="16" viewBox="0 0 16 16"><defs><linearGradient id="cg" x1="0" y1="1" x2="1" y2="0"><stop offset="0" stop-color="#555"/><stop offset="1" stop-color="#f0f0f0"/></linearGradient></defs><path d="M2.500 14v-11.500c6 0 11.500 5 11.500 11.500z" fill="url(#cg)" stroke="#d6d6d6" stroke-width="1"/><path d="M2.500 14v-6.500c3.500 0 6.500 3 6.500 6.500z" fill="#6a6a6a" stroke="#d6d6d6" stroke-width="0.700"/></svg>
<svg class="a" style="left:1259.500px;top:105px" width="16" height="16" viewBox="0 0 16 16" fill="#d6d6d6"><g transform="translate(8 8) scale(0.900) translate(-8 -8)"><rect x="2" y="3.500" width="12" height="8.500" fill="none" stroke="#d6d6d6" stroke-width="1"/><rect x="3.500" y="5" width="2.500" height="2.300"/><rect x="6.800" y="5" width="2.500" height="2.300"/><rect x="10" y="5" width="2.500" height="2.300"/><rect x="3.500" y="8.300" width="2.500" height="2.300"/><rect x="6.800" y="8.300" width="2.500" height="2.300"/><rect x="10" y="8.300" width="2.500" height="2.300"/></g></svg>
<svg class="a" style="left:1259.500px;top:124px" width="16" height="16" viewBox="0 0 16 16" fill="#d6d6d6"><g transform="translate(8 8) scale(0.900) translate(-8 -8)"><path d="M4.500 8h7l-0.700 7h-5.600z"/><path d="M6 8l-2-5.500M8 8v-6.500M10 8l2.500-4.500" fill="none" stroke="#d6d6d6" stroke-width="1.300"/><circle cx="8" cy="1.800" r="1.300"/><path d="M3.500 1.500l1.500 1-1 1.200z M12.800 2.500l0.800 1.600-1.700 0.300z"/></g></svg>
<svg class="a" style="left:1259.500px;top:142.5px" width="16" height="16" viewBox="0 0 16 16" fill="#d6d6d6"><g transform="translate(8 8) scale(0.900) translate(-8 -8)"><circle cx="8" cy="5" r="2.800"/><circle cx="4.800" cy="9" r="2.800"/><circle cx="11.200" cy="9" r="2.800"/><path d="M8 8l-2 6.500h4z"/></g></svg>
<svg class="a" style="left:1259px;top:169px" width="16" height="16" viewBox="0 0 16 16"><defs><linearGradient id="g2"><stop offset="0" stop-color="#3a3a3a"/><stop offset="1" stop-color="#f0f0f0"/></linearGradient></defs><rect x="2" y="3.500" width="12" height="9" fill="url(#g2)" stroke="#d6d6d6" stroke-width="1"/></svg>
<svg class="a" style="left:1259.500px;top:189px" width="16" height="16" viewBox="0 0 16 16" fill="#d6d6d6"><g transform="translate(8 8) scale(0.900) translate(-8 -8)"><circle cx="6.800" cy="6.800" r="4.500" fill="#9a9a9a" stroke="#d6d6d6" stroke-width="1"/><circle cx="9.500" cy="9.500" r="4.300" fill="#bdbdbd" fill-opacity="0.600" stroke="#e2e2e2" stroke-width="1.100"/></g></svg>
<svg class="a" style="left:1259.500px;top:206.5px" width="16" height="16" viewBox="0 0 16 16" fill="#d6d6d6"><g transform="translate(8 8) scale(0.900) translate(-8 -8)"><rect x="2" y="3.500" width="12" height="1.300"/><rect x="2" y="7" width="12" height="2"/><rect x="2" y="11" width="12" height="2.500"/></g></svg>
<svg class="a" style="left:1259.500px;top:235px" width="16" height="16" viewBox="0 0 16 16" fill="#d6d6d6"><g transform="translate(8 8) scale(0.900) translate(-8 -8)"><path d="M4.500 12.500c-2 0-3.500-1.500-3.500-3.300 0-1.700 1.200-3 2.800-3.300 0.500-2 2.200-3.400 4.300-3.400 2 0 3.700 1.200 4.300 3 1.500 0.300 2.600 1.700 2.600 3.300 0 2-1.500 3.700-3.500 3.700z" fill="none" stroke="#d6d6d6" stroke-width="1.200"/><path d="M5 10c-1-1.500 0.500-3 2-2l3.500 2c1.500 1 3-0.500 2-2" fill="none" stroke="#d6d6d6" stroke-width="1.100"/></g></svg>
<svg class="a" style="left:1259.500px;top:253px" width="16" height="16" viewBox="0 0 16 16" fill="#d6d6d6"><g transform="translate(8 8) scale(0.900) translate(-8 -8)"><circle cx="8" cy="8" r="3.600" fill="#cfcfcf"/><circle cx="8" cy="8" r="5.800" fill="none" stroke="#d6d6d6" stroke-width="1.200" stroke-dasharray="1.200 1.300"/></g></svg>
<svg class="a" style="left:1259.500px;top:272px" width="16" height="16" viewBox="0 0 16 16" fill="#d6d6d6"><g transform="translate(8 8) scale(0.900) translate(-8 -8)"><rect x="5" y="2.500" width="9" height="9" fill="none" stroke="#d6d6d6" stroke-width="1"/><rect x="2" y="7.500" width="6" height="6" fill="#484848" stroke="#d6d6d6" stroke-width="1"/><circle cx="5" cy="10.500" r="1.300"/></g></svg>
<svg class="a" style="left:1259.500px;top:299px" width="16" height="16" viewBox="0 0 16 16" fill="#d6d6d6"><g transform="translate(8 8) scale(0.900) translate(-8 -8)"><path d="M8 2l6.500 3.800-6.500 3.800-6.500-3.800z"/><path d="M2.800 8.500l-1.300 0.800 6.500 3.800 6.500-3.800-1.300-0.800-5.200 3z"/></g></svg>
<svg class="a" style="left:1259.500px;top:317.5px" width="16" height="16" viewBox="0 0 16 16" fill="#d6d6d6"><g transform="translate(8 8) scale(0.900) translate(-8 -8)"><rect x="2" y="2.500" width="8" height="7" fill="none" stroke="#d6d6d6" stroke-width="1.100"/><rect x="6" y="6.500" width="8" height="7" fill="#484848" stroke="#d6d6d6" stroke-width="1.100"/></g></svg>
<svg class="a" style="left:1259.500px;top:344.5px" width="16" height="16" viewBox="0 0 16 16" fill="#d6d6d6"><g transform="translate(8 8) scale(0.900) translate(-8 -8)"><rect x="3" y="3" width="10" height="10" fill="none" stroke="#d6d6d6" stroke-width="1.100" stroke-dasharray="1.500 1.300"/><rect x="1.800" y="1.800" width="2.400" height="2.400"/><rect x="11.800" y="1.800" width="2.400" height="2.400"/><rect x="1.800" y="11.800" width="2.400" height="2.400"/><rect x="11.800" y="11.800" width="2.400" height="2.400"/></g></svg>
<svg class="a" style="left:1259.500px;top:363px" width="16" height="16" viewBox="0 0 16 16" fill="#d6d6d6"><g transform="translate(8 8) scale(0.900) translate(-8 -8)"><rect x="2.500" y="2" width="1.300" height="12"/><rect x="5" y="3.500" width="5" height="3.500"/><rect x="5" y="9" width="9" height="3.500"/></g></svg>
<svg class="a" style="left:1259.500px;top:382.5px" width="16" height="16" viewBox="0 0 16 16" fill="#d6d6d6"><g transform="translate(8 8) scale(0.900) translate(-8 -8)"><rect x="2.500" y="2.500" width="7" height="7"/><rect x="6.500" y="6.500" width="7" height="7" fill="#9a9a9a" stroke="#d6d6d6" stroke-width="1"/></g></svg>
<div class="t" style="left:1260px;top:410px;font-size:11.500px;line-height:15px;height:15px;color:#dcdcdc;">A</div><div class="a" style="left:1270.500px;top:411px;width:1px;height:12.500px;background:#dcdcdc;"></div>
<div class="t" style="left:1262px;top:428px;font-size:12px;line-height:15px;height:15px;color:#dcdcdc;font-weight:bold;">¶</div>
<div class="t" style="left:1261.500px;top:447px;font-size:14px;line-height:16px;height:16px;color:#e4e4e4;font-family:'Liberation Serif',serif;font-style:italic;font-weight:bold;">O</div>

<!-- ====== status ====== -->
<div class="a" id="status"></div>
<div class="a" style="left:49px;top:681.300px;width:1204px;height:2.200px;background:#262626;"></div>
<svg class="a" style="left:53px;top:684px" width="14" height="8" viewBox="0 0 14 8"><rect x="0.500" y="0.500" width="13" height="7" rx="1" fill="none" stroke="#5c5c5c"/><circle cx="4" cy="4" r="1.800" fill="none" stroke="#5c5c5c"/><path d="M8 3h3M8 5h3" stroke="#5c5c5c"/></svg>
<svg class="a" style="left:73px;top:683px" width="12" height="10" viewBox="0 0 12 10"><path d="M5.500 2.500h-4v6.500h8v-3" fill="none" stroke="#e0e0e0" stroke-width="1.300"/><path d="M7 0.500l4 2.800-4 2.800v-1.800c-1.500 0-2.500 0.500-3.500 1.800 0.300-2.500 1.500-3.800 3.500-3.900z" fill="#f0f0f0"/></svg>
<div class="fld" style="left:90.500px;top:684px;width:35px;height:9px;line-height:9px;"><span style="position:relative;left:1.500px;letter-spacing:-0.75px;font-size:8px;">200%</span></div>
<div class="btn" style="left:126.500px;top:684px;width:8.500px;height:9px;"></div><svg class="a" style="left:126.500px;top:683.500px" width="8.500" height="10" viewBox="0 0 8.500 10"><path d="M1.500 3.500h5.500l-2.750 4z" fill="#f0f0f0"/></svg>
<svg class="a" style="left:140px;top:684px" width="20" height="8" viewBox="0 0 20 8"><path d="M1.500 1v6" stroke="#6a6a6a" stroke-width="1.200"/><path d="M7 1v6l-4-3z M18 1v6l-4-3z" fill="#6a6a6a"/></svg>
<div class="fld" style="left:163.500px;top:684px;width:28px;height:9px;line-height:9px;"><span style="position:relative;left:2px;font-size:8px;">1</span></div>
<div class="btn" style="left:192.500px;top:684px;width:8.500px;height:9px;"></div><svg class="a" style="left:192.500px;top:683.500px" width="8.500" height="10" viewBox="0 0 8.500 10"><path d="M1.500 3.500h5.500l-2.750 4z" fill="#f0f0f0"/></svg>
<svg class="a" style="left:206px;top:684px" width="20" height="8" viewBox="0 0 20 8"><path d="M2 1v6l4-3z M12 1v6l4-3z" fill="#6a6a6a"/><path d="M17.500 1v6" stroke="#6a6a6a" stroke-width="1.200"/></svg>
<div class="a" style="left:229.500px;top:682.500px;width:1px;height:10.500px;background:#2a2a2a;"></div>
<div class="t" style="left:281px;top:683px;font-size:8px;line-height:11px;height:11px;color:#f0f0f0;">直接选择</div>
<svg class="a" style="left:368px;top:684.500px" width="6" height="8" viewBox="0 0 6 8"><path d="M1 0.500v7l4-3.500z" fill="#f0f0f0"/></svg>
<div class="a" style="left:377px;top:683.500px;width:865px;height:9.500px;background:#333;"></div>
<svg class="a" style="left:379px;top:684.500px" width="6" height="8" viewBox="0 0 6 8"><path d="M5 0.500v7l-4-3.500z" fill="#f0f0f0"/></svg>
<svg class="a" style="left:1233px;top:684.500px" width="6" height="8" viewBox="0 0 6 8"><path d="M1 0.500v7l4-3.500z" fill="#f0f0f0"/></svg>
<div class="a" style="left:803.500px;top:684px;width:10.500px;height:9px;background:#9b9b9b;"></div>
<div class="t" style="left:1087px;top:628.500px;font-size:14.200px;line-height:20px;height:20px;color:#b0b0b0;font-weight:300;">激活 Windows</div>
<div class="t" style="left:1087.500px;top:647px;font-size:10.300px;line-height:14px;height:14px;color:#b2b2b2;font-weight:300;">转到“设置”以激活 Windows。</div>

</body>
</html>
